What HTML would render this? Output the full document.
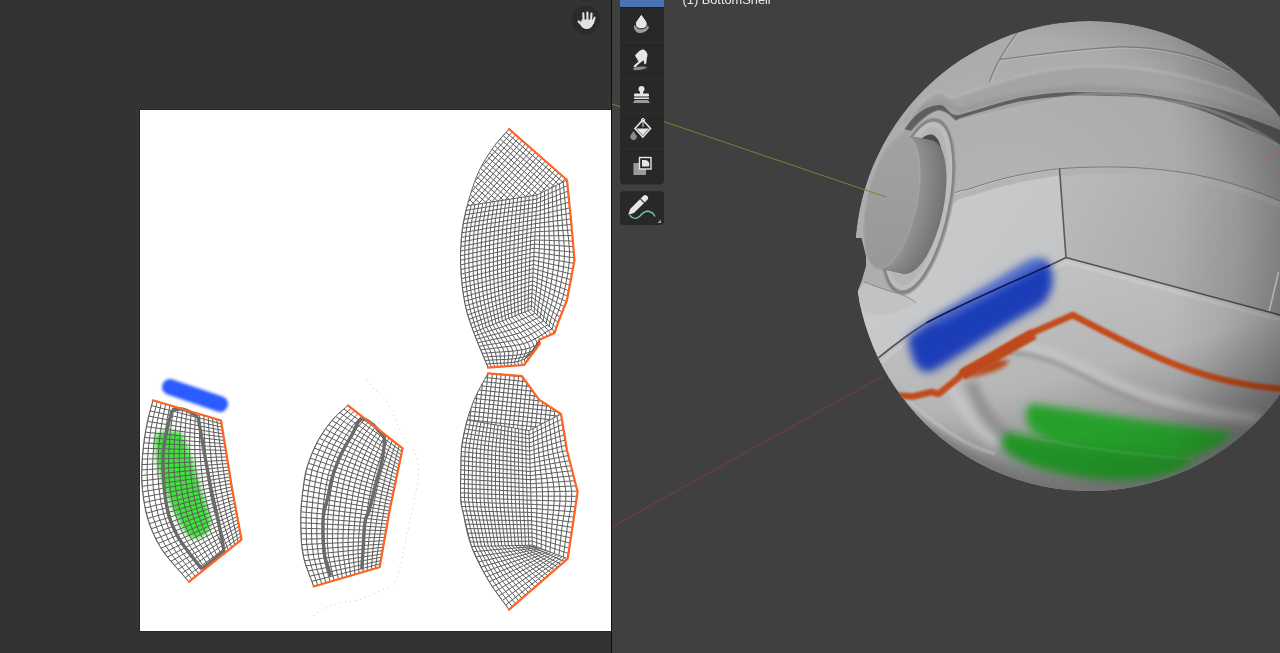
<!DOCTYPE html>
<html><head><meta charset="utf-8">
<style>
html,body{margin:0;padding:0;width:1280px;height:653px;overflow:hidden;background:#404040;font-family:"Liberation Sans",sans-serif;}
svg{display:block;position:absolute;left:0;top:0;}
.txt{position:absolute;left:682px;top:-10px;color:#e6e6e6;font-size:13px;white-space:nowrap;}
</style></head><body>
<svg width="1280" height="653" viewBox="0 0 1280 653">
<defs>
  <filter id="blur3" x="-30%" y="-30%" width="160%" height="160%"><feGaussianBlur stdDeviation="3"/></filter>
  <filter id="blur2" x="-30%" y="-30%" width="160%" height="160%"><feGaussianBlur stdDeviation="1.5"/></filter>
  <radialGradient id="sph" cx="0.35" cy="0.45" r="0.75">
    <stop offset="0" stop-color="#c4c4c4"/>
    <stop offset="0.6" stop-color="#adadad"/>
    <stop offset="1" stop-color="#8a8a8a"/>
  </radialGradient>
  <filter id="gblur" filterUnits="userSpaceOnUse" x="130" y="410" width="110" height="150"><feGaussianBlur stdDeviation="2"/></filter>
  <filter id="bblur" filterUnits="userSpaceOnUse" x="140" y="360" width="120" height="70"><feGaussianBlur stdDeviation="1.5"/></filter>
  <filter id="idf" filterUnits="userSpaceOnUse" x="670" y="-20" width="120" height="40"><feOffset dx="0" dy="0"/></filter>
</defs>
<!-- left image editor -->
<rect x="0" y="0" width="611" height="653" fill="#333333"/>
<rect x="139.5" y="109.5" width="472" height="522" fill="none" stroke="#262626" stroke-width="1"/>
<rect x="140" y="110" width="471" height="521" fill="#ffffff"/>
<clipPath id="cA"><path d="M509.0 129.0 567.0 180.0 571.0 220.0 574.5 260.0 567.0 300.0 559.0 320.0 554.6 333.0 539.0 340.0 540.0 343.0 524.0 365.0 488.0 367.6 486.5 364.0 485.0 360.4 483.5 356.7 482.0 353.1 480.4 349.4 478.9 345.8 477.5 342.3 476.1 338.8 474.8 335.4 473.6 332.2 472.5 329.1 471.4 326.3 470.5 323.5 469.5 320.9 468.7 318.3 467.9 315.7 467.1 313.1 466.4 310.3 465.7 307.4 465.0 304.3 464.4 301.0 463.8 297.5 463.2 293.9 462.7 290.3 462.2 286.5 461.8 282.7 461.5 278.9 461.1 275.2 460.9 271.5 460.7 267.9 460.6 264.4 460.5 260.8 460.5 257.3 460.5 253.7 460.6 250.2 460.8 246.8 461.0 243.3 461.2 240.0 461.5 236.8 461.8 233.6 462.1 230.6 462.5 227.7 462.9 224.9 463.4 222.2 463.9 219.6 464.5 216.9 465.1 214.3 465.7 211.5 466.4 208.7 467.2 205.8 468.0 202.7 468.9 199.5 469.9 196.3 470.9 192.9 471.9 189.6 473.1 186.2 474.2 182.9 475.4 179.7 476.6 176.6 477.9 173.6 479.2 170.7 480.6 167.9 482.0 165.2 483.5 162.5 485.1 159.9 486.6 157.4 488.2 154.9 489.8 152.5 491.3 150.2 492.9 147.9 494.6 145.5 496.4 143.2 498.2 141.1 500.0 139.0 501.8 137.0 503.6 135.0 505.4 133.1 507.2 131.1 509.0 129.0Z"/></clipPath>
<g clip-path="url(#cA)"><clipPath id="gA"><path d="M509.0 129.0 567.0 180.0 537.0 195.0 467.2 205.8 477.9 173.6 492.9 147.9Z"/></clipPath><g clip-path="url(#gA)"><path d="M496.1 -22.9L661.3 122.3M502.3 -23.3L357.1 141.9M493.2 -19.6L658.4 125.6M505.6 -20.4L360.4 144.8M490.2 -16.3L655.5 128.9M508.9 -17.5L363.7 147.8M487.3 -13.0L652.6 132.2M512.2 -14.6L367.0 150.7M484.4 -9.7L649.7 135.5M515.5 -11.7L370.3 153.6M481.5 -6.4L646.8 138.8M518.8 -8.8L373.6 156.5M478.6 -3.1L643.9 142.1M522.1 -5.9L376.9 159.4M475.7 0.2L641.0 145.4M525.4 -3.0L380.2 162.3M472.8 3.5L638.1 148.7M528.7 -0.1L383.5 165.2M469.9 6.8L635.2 152.0M532.0 2.8L386.8 168.1M467.0 10.1L632.3 155.3M535.3 5.7L390.1 171.0M464.1 13.4L629.4 158.6M538.6 8.6L393.4 173.9M461.2 16.7L626.5 161.9M541.9 11.5L396.7 176.8M458.3 20.0L623.6 165.2M545.2 14.4L400.0 179.7M455.4 23.3L620.7 168.5M548.5 17.3L403.3 182.6M452.5 26.6L617.8 171.9M551.9 20.2L406.6 185.5M449.6 30.0L614.9 175.2M555.2 23.1L410.0 188.4M446.7 33.3L612.0 178.5M558.5 26.0L413.3 191.3M443.8 36.6L609.1 181.8M561.8 28.9L416.6 194.2M440.9 39.9L606.2 185.1M565.1 31.8L419.9 197.1M438.0 43.2L603.3 188.4M568.4 34.7L423.2 200.0M435.1 46.5L600.4 191.7M571.7 37.6L426.5 202.9M432.2 49.8L597.4 195.0M575.0 40.6L429.8 205.8M429.3 53.1L594.5 198.3M578.3 43.5L433.1 208.7M426.4 56.4L591.6 201.6M581.6 46.4L436.4 211.6M423.5 59.7L588.7 204.9M584.9 49.3L439.7 214.5M420.6 63.0L585.8 208.2M588.2 52.2L443.0 217.4M417.6 66.3L582.9 211.5M591.5 55.1L446.3 220.4M414.7 69.6L580.0 214.8M594.8 58.0L449.6 223.3M411.8 72.9L577.1 218.1M598.1 60.9L452.9 226.2M408.9 76.2L574.2 221.4M601.4 63.8L456.2 229.1M406.0 79.5L571.3 224.7M604.7 66.7L459.5 232.0M403.1 82.8L568.4 228.0M608.0 69.6L462.8 234.9M400.2 86.1L565.5 231.4M611.4 72.5L466.1 237.8M397.3 89.5L562.6 234.7M614.7 75.4L469.5 240.7M394.4 92.8L559.7 238.0M618.0 78.3L472.8 243.6M391.5 96.1L556.8 241.3M621.3 81.2L476.1 246.5M388.6 99.4L553.9 244.6M624.6 84.1L479.4 249.4M385.7 102.7L551.0 247.9M627.9 87.0L482.7 252.3M382.8 106.0L548.1 251.2M631.2 89.9L486.0 255.2M379.9 109.3L545.2 254.5M634.5 92.8L489.3 258.1M377.0 112.6L542.3 257.8M637.8 95.7L492.6 261.0M374.1 115.9L539.4 261.1M641.1 98.6L495.9 263.9M371.2 119.2L536.5 264.4M644.4 101.5L499.2 266.8M368.3 122.5L533.6 267.7M647.7 104.4L502.5 269.7M365.4 125.8L530.7 271.0M651.0 107.3L505.8 272.6M362.5 129.1L527.8 274.3M654.3 110.2L509.1 275.5M359.6 132.4L524.8 277.6M657.6 113.2L512.4 278.4M356.7 135.7L521.9 280.9M660.9 116.1L515.7 281.3" fill="none" stroke="#5c5c5c" stroke-width="1"/></g><path d="M540.8 193.1 540.5 202.3 540.3 211.5 540.0 220.7 539.8 229.9 539.6 239.1 539.3 248.3 538.9 257.6 538.3 266.7 537.6 275.9 536.9 285.1 536.0 294.2 535.0 303.3 534.1 312.4M544.5 191.2 544.5 200.8 544.4 210.4 544.4 220.0 544.4 229.6 544.4 239.2 544.4 248.8 544.0 258.5 543.2 268.0 542.3 277.6 541.2 287.1 539.9 296.6 538.3 305.9 537.0 315.4M548.2 189.4 548.4 199.4 548.6 209.4 548.8 219.4 549.0 229.4 549.3 239.3 549.4 249.3 549.0 259.3 548.1 269.3 546.9 279.2 545.5 289.1 543.8 298.9 541.7 308.5 540.0 318.3M552.0 187.5 552.4 197.9 552.8 208.3 553.1 218.7 553.6 229.1 554.1 239.4 554.4 249.8 554.0 260.2 553.0 270.6 551.5 280.9 549.9 291.1 547.7 301.2 545.0 311.1 542.9 321.2M555.8 185.6 556.3 196.4 556.9 207.2 557.5 218.0 558.1 228.8 558.9 239.5 559.4 250.3 559.1 261.1 557.9 271.9 556.2 282.6 554.2 293.2 551.6 303.6 548.4 313.7 545.8 324.2M559.5 183.8 560.3 194.9 561.1 206.1 561.9 217.3 562.7 228.5 563.8 239.6 564.5 250.8 564.1 262.0 562.8 273.2 560.8 284.2 558.5 295.2 555.5 305.9 551.7 316.4 548.8 327.1M563.2 181.9 564.3 193.5 565.3 205.0 566.2 216.6 567.3 228.2 568.6 239.7 569.5 251.3 569.2 262.9 567.6 274.5 565.4 285.9 562.9 297.2 559.4 308.3 555.1 319.0 551.7 330.1M567.0 180.0 568.2 192.0 569.4 203.9 570.6 215.9 571.9 227.9 573.4 239.8 574.5 251.8 574.2 263.8 572.5 275.8 570.1 287.5 567.2 299.2 563.3 310.6 558.4 321.6 554.6 333.0M537.0 195.0 539.3 193.8 541.6 192.7 543.9 191.5 546.2 190.4 548.5 189.2 550.8 188.1 553.2 186.9 555.5 185.8 557.8 184.6 560.1 183.5 562.4 182.3 564.7 181.2 567.0 180.0M536.8 199.1 539.2 198.0 541.5 197.0 543.9 196.0 546.3 194.9 548.6 193.9 551.0 192.8 553.4 191.8 555.7 190.8 558.1 189.7 560.5 188.7 562.8 187.6 565.2 186.6 567.6 185.6M536.6 203.2 539.0 202.3 541.4 201.3 543.9 200.4 546.3 199.5 548.7 198.5 551.1 197.6 553.6 196.7 556.0 195.8 558.4 194.8 560.8 193.9 563.3 193.0 565.7 192.0 568.1 191.1M536.4 207.3 538.9 206.5 541.4 205.6 543.8 204.8 546.3 204.0 548.8 203.2 551.3 202.4 553.8 201.6 556.3 200.8 558.8 199.9 561.2 199.1 563.7 198.3 566.2 197.5 568.7 196.7M536.2 211.4 538.7 210.7 541.3 210.0 543.8 209.3 546.4 208.6 548.9 207.9 551.4 207.1 554.0 206.4 556.5 205.7 559.1 205.0 561.6 204.3 564.2 203.6 566.7 202.9 569.3 202.2M536.0 215.4 538.6 214.9 541.2 214.3 543.8 213.7 546.4 213.1 549.0 212.5 551.6 211.9 554.2 211.3 556.8 210.7 559.4 210.2 562.0 209.6 564.6 209.0 567.2 208.4 569.8 207.8M535.8 219.5 538.4 219.1 541.1 218.6 543.7 218.1 546.4 217.6 549.1 217.2 551.7 216.7 554.4 216.2 557.1 215.7 559.7 215.3 562.4 214.8 565.0 214.3 567.7 213.8 570.4 213.4M535.5 223.6 538.3 223.3 541.0 222.9 543.7 222.5 546.4 222.2 549.1 221.8 551.9 221.5 554.6 221.1 557.3 220.7 560.0 220.4 562.7 220.0 565.5 219.6 568.2 219.3 570.9 218.9M535.3 227.7 538.1 227.5 540.9 227.2 543.7 227.0 546.5 226.7 549.2 226.5 552.0 226.2 554.8 226.0 557.6 225.7 560.4 225.5 563.1 225.2 565.9 225.0 568.7 224.7 571.5 224.5M535.1 231.8 538.0 231.7 540.8 231.5 543.7 231.4 546.5 231.3 549.4 231.1 552.2 231.0 555.1 230.8 557.9 230.7 560.8 230.6 563.6 230.4 566.5 230.3 569.3 230.2 572.2 230.0M534.9 235.9 537.8 235.9 540.8 235.8 543.7 235.8 546.6 235.8 549.5 235.8 552.5 235.7 555.4 235.7 558.3 235.7 561.2 235.7 564.1 235.6 567.1 235.6 570.0 235.6 572.9 235.6M534.7 240.0 537.7 240.1 540.7 240.2 543.7 240.2 546.7 240.3 549.7 240.4 552.7 240.5 555.7 240.6 558.6 240.7 561.6 240.8 564.6 240.9 567.6 240.9 570.6 241.0 573.6 241.1M534.5 244.1 537.6 244.3 540.6 244.5 543.7 244.7 546.7 244.9 549.8 245.1 552.8 245.3 555.9 245.5 558.9 245.7 562.0 245.9 565.0 246.1 568.1 246.3 571.1 246.5 574.2 246.7M534.3 248.2 537.4 248.5 540.5 248.8 543.6 249.1 546.7 249.4 549.8 249.7 552.9 250.0 556.0 250.4 559.1 250.7 562.1 251.0 565.2 251.3 568.3 251.6 571.4 251.9 574.5 252.2M534.1 252.2 537.2 252.7 540.3 253.1 543.4 253.5 546.6 254.0 549.7 254.4 552.8 254.8 555.9 255.3 559.0 255.7 562.1 256.1 565.2 256.5 568.3 257.0 571.5 257.4 574.6 257.8M533.9 256.3 537.0 256.9 540.1 257.4 543.2 258.0 546.3 258.5 549.4 259.1 552.5 259.6 555.6 260.1 558.7 260.7 561.8 261.2 564.9 261.8 568.0 262.3 571.2 262.9 574.3 263.4M533.7 260.4 536.8 261.1 539.8 261.7 542.9 262.4 546.0 263.1 549.0 263.7 552.1 264.4 555.2 265.0 558.3 265.7 561.3 266.3 564.4 267.0 567.5 267.7 570.6 268.3 573.6 269.0M533.5 264.5 536.5 265.3 539.5 266.1 542.5 266.8 545.6 267.6 548.6 268.4 551.6 269.1 554.6 269.9 557.7 270.7 560.7 271.4 563.7 272.2 566.7 273.0 569.7 273.7 572.8 274.5M533.3 268.6 536.2 269.5 539.2 270.4 542.1 271.2 545.1 272.1 548.1 273.0 551.0 273.9 554.0 274.7 556.9 275.6 559.9 276.5 562.9 277.4 565.8 278.2 568.8 279.1 571.7 280.0M533.1 272.7 535.9 273.7 538.8 274.7 541.7 275.6 544.6 276.6 547.5 277.6 550.4 278.6 553.3 279.6 556.1 280.5 559.0 281.5 561.9 282.5 564.8 283.5 567.7 284.5 570.6 285.4M532.9 276.8 535.7 277.9 538.5 279.0 541.3 280.0 544.1 281.1 546.9 282.2 549.7 283.3 552.5 284.4 555.3 285.5 558.1 286.5 560.9 287.6 563.7 288.7 566.5 289.8 569.3 290.9M532.7 280.9 535.4 282.1 538.1 283.2 540.8 284.4 543.5 285.6 546.2 286.8 548.9 288.0 551.7 289.2 554.4 290.4 557.1 291.6 559.8 292.7 562.5 293.9 565.2 295.1 567.9 296.3M532.4 285.0 535.1 286.3 537.7 287.5 540.3 288.8 542.9 290.1 545.6 291.4 548.2 292.7 550.8 294.0 553.4 295.3 556.0 296.6 558.7 297.8 561.3 299.1 563.9 300.4 566.5 301.7M532.2 289.1 534.7 290.4 537.2 291.8 539.7 293.2 542.2 294.6 544.8 296.0 547.3 297.3 549.8 298.7 552.3 300.1 554.8 301.5 557.3 302.9 559.8 304.3 562.3 305.6 564.8 307.0M532.0 293.1 534.4 294.6 536.7 296.1 539.1 297.5 541.4 299.0 543.8 300.5 546.1 301.9 548.5 303.4 550.8 304.8 553.2 306.3 555.5 307.8 557.9 309.2 560.2 310.7 562.6 312.2M531.8 297.2 534.0 298.8 536.2 300.3 538.4 301.8 540.5 303.4 542.7 304.9 544.9 306.4 547.1 308.0 549.3 309.5 551.5 311.1 553.6 312.6 555.8 314.1 558.0 315.7 560.2 317.2M531.6 301.3 533.7 302.9 535.7 304.6 537.7 306.2 539.8 307.8 541.8 309.4 543.8 311.0 545.9 312.7 547.9 314.3 550.0 315.9 552.0 317.5 554.0 319.2 556.1 320.8 558.1 322.4M531.4 305.4 533.3 307.1 535.2 308.8 537.2 310.6 539.1 312.3 541.0 314.0 542.9 315.7 544.8 317.4 546.7 319.1 548.7 320.8 550.6 322.5 552.5 324.3 554.4 326.0 556.3 327.7M467.2 205.8 465.1 215.5 463.0 225.1 461.7 234.9 460.9 244.8 460.5 254.7 460.6 264.6 461.1 274.4 462.0 284.3 463.2 294.1 464.9 303.9 467.3 313.4 470.4 322.8 473.6 332.2M471.1 205.2 469.1 214.8 467.1 224.4 465.8 234.2 465.0 244.0 464.7 253.8 464.7 263.6 465.1 273.5 466.0 283.2 467.1 293.0 468.7 302.7 470.9 312.2 473.8 321.6 476.8 330.9M475.0 204.6 473.0 214.2 471.2 223.7 469.9 233.4 469.2 243.2 468.8 252.9 468.8 262.7 469.2 272.5 469.9 282.2 471.0 291.9 472.4 301.5 474.5 311.1 477.2 320.4 480.0 329.7M478.8 204.0 477.0 213.5 475.2 223.1 474.0 232.7 473.3 242.4 472.9 252.1 472.9 261.8 473.2 271.5 473.9 281.2 474.9 290.8 476.2 300.4 478.1 309.9 480.6 319.1 483.2 328.4M482.7 203.4 481.0 212.9 479.3 222.4 478.1 231.9 477.4 241.6 477.0 251.2 477.0 260.9 477.3 270.5 477.9 280.1 478.7 289.7 479.9 299.2 481.7 308.7 484.0 317.9 486.4 327.2M486.6 202.8 484.9 212.2 483.3 221.7 482.2 231.2 481.5 240.7 481.1 250.3 481.1 259.9 481.3 269.5 481.8 279.1 482.6 288.6 483.7 298.1 485.3 307.5 487.4 316.7 489.6 325.9M490.5 202.2 488.9 211.6 487.4 221.0 486.3 230.4 485.7 239.9 485.3 249.5 485.2 259.0 485.4 268.5 485.8 278.0 486.5 287.5 487.5 296.9 488.9 306.3 490.8 315.4 492.8 324.6M494.3 201.6 492.9 210.9 491.5 220.3 490.4 229.7 489.8 239.1 489.4 248.6 489.3 258.1 489.4 267.5 489.8 277.0 490.4 286.4 491.2 295.8 492.5 305.1 494.2 314.2 496.0 323.4M498.2 201.0 496.9 210.3 495.5 219.6 494.6 228.9 493.9 238.3 493.5 247.7 493.4 257.1 493.4 266.5 493.7 275.9 494.2 285.3 495.0 294.6 496.1 303.9 497.6 313.0 499.2 322.1M502.1 200.4 500.8 209.6 499.6 218.9 498.7 228.2 498.1 237.5 497.6 246.9 497.5 256.2 497.5 265.5 497.7 274.9 498.1 284.2 498.7 293.5 499.7 302.7 501.0 311.8 502.4 320.9M506.0 199.8 504.8 209.0 503.6 218.2 502.8 227.4 502.2 236.7 501.8 246.0 501.5 255.3 501.5 264.6 501.7 273.8 502.0 283.1 502.5 292.3 503.3 301.5 504.4 310.5 505.6 319.6M509.9 199.2 508.8 208.3 507.7 217.5 506.9 226.7 506.3 235.9 505.9 245.1 505.6 254.3 505.6 263.6 505.6 272.8 505.9 282.0 506.2 291.2 506.9 300.3 507.8 309.3 508.8 318.3M513.7 198.6 512.7 207.7 511.8 216.8 511.0 225.9 510.4 235.1 510.0 244.3 509.7 253.4 509.6 262.6 509.6 271.7 509.7 280.9 510.0 290.0 510.5 299.1 511.2 308.1 512.0 317.1M517.6 198.0 516.7 207.0 515.8 216.1 515.1 225.2 514.6 234.3 514.1 243.4 513.8 252.5 513.7 261.6 513.6 270.7 513.6 279.8 513.8 288.8 514.1 297.9 514.6 306.8 515.2 315.8M521.5 197.4 520.7 206.4 519.9 215.4 519.2 224.4 518.7 233.5 518.3 242.5 517.9 251.6 517.7 260.6 517.6 269.6 517.5 278.7 517.5 287.7 517.7 296.7 518.0 305.6 518.4 314.5M525.4 196.8 524.6 205.8 523.9 214.7 523.3 223.7 522.8 232.7 522.4 241.6 522.0 250.6 521.7 259.6 521.5 268.6 521.4 277.6 521.3 286.5 521.3 295.5 521.4 304.4 521.6 313.3M529.2 196.2 528.6 205.1 528.0 214.0 527.4 222.9 527.0 231.8 526.5 240.8 526.1 249.7 525.8 258.6 525.5 267.6 525.2 276.5 525.0 285.4 524.9 294.3 524.8 303.2 524.8 312.0M533.1 195.6 532.6 204.5 532.0 213.3 531.6 222.2 531.1 231.0 530.6 239.9 530.2 248.8 529.8 257.6 529.5 266.5 529.1 275.4 528.8 284.2 528.5 293.1 528.2 301.9 528.0 310.8M537.0 195.0 536.6 203.8 536.1 212.6 535.7 221.4 535.2 230.2 534.8 239.0 534.3 247.8 533.9 256.7 533.4 265.5 533.0 274.3 532.5 283.1 532.1 291.9 531.6 300.7 531.2 309.5M467.2 205.8 472.6 205.0 477.9 204.1 483.3 203.3 488.7 202.5 494.0 201.6 499.4 200.8 504.8 200.0 510.2 199.2 515.5 198.3 520.9 197.5 526.3 196.7 531.6 195.8 537.0 195.0M466.3 210.3 471.7 209.4 477.1 208.6 482.5 207.7 488.0 206.8 493.4 206.0 498.8 205.1 504.2 204.3 509.7 203.4 515.1 202.5 520.5 201.7 525.9 200.8 531.4 200.0 536.8 199.1M465.3 214.8 470.7 213.9 476.2 213.0 481.7 212.1 487.2 211.2 492.7 210.3 498.2 209.4 503.7 208.5 509.1 207.6 514.6 206.7 520.1 205.9 525.6 205.0 531.1 204.1 536.6 203.2M464.2 219.3 469.8 218.3 475.3 217.4 480.9 216.5 486.4 215.6 492.0 214.6 497.5 213.7 503.1 212.8 508.6 211.9 514.2 211.0 519.7 210.0 525.3 209.1 530.8 208.2 536.4 207.3M463.3 223.8 468.9 222.8 474.5 221.8 480.1 220.9 485.7 219.9 491.3 219.0 496.9 218.0 502.5 217.1 508.1 216.1 513.7 215.2 519.4 214.2 525.0 213.3 530.6 212.3 536.2 211.4M462.5 228.3 468.2 227.3 473.8 226.3 479.5 225.3 485.1 224.3 490.8 223.3 496.4 222.4 502.1 221.4 507.7 220.4 513.4 219.4 519.0 218.4 524.7 217.4 530.3 216.4 536.0 215.4M461.9 232.8 467.6 231.8 473.2 230.8 478.9 229.8 484.6 228.7 490.3 227.7 496.0 226.7 501.7 225.7 507.3 224.6 513.0 223.6 518.7 222.6 524.4 221.6 530.1 220.6 535.8 219.5M461.4 237.4 467.1 236.3 472.8 235.3 478.5 234.2 484.2 233.2 489.9 232.1 495.6 231.0 501.3 230.0 507.0 228.9 512.7 227.9 518.4 226.8 524.1 225.7 529.8 224.7 535.5 223.6M461.1 242.0 466.8 240.9 472.5 239.8 478.2 238.7 483.9 237.6 489.6 236.5 495.4 235.4 501.1 234.3 506.8 233.2 512.5 232.1 518.2 231.0 523.9 229.9 529.6 228.8 535.3 227.7M460.8 246.6 466.5 245.4 472.2 244.3 478.0 243.2 483.7 242.0 489.4 240.9 495.1 239.7 500.8 238.6 506.5 237.5 512.3 236.3 518.0 235.2 523.7 234.1 529.4 232.9 535.1 231.8M460.6 251.1 466.3 250.0 472.0 248.8 477.8 247.6 483.5 246.5 489.2 245.3 494.9 244.1 500.6 242.9 506.3 241.8 512.1 240.6 517.8 239.4 523.5 238.2 529.2 237.1 534.9 235.9M460.5 255.7 466.2 254.5 471.9 253.3 477.6 252.1 483.3 250.9 489.1 249.7 494.8 248.5 500.5 247.3 506.2 246.0 511.9 244.8 517.6 243.6 523.3 242.4 529.0 241.2 534.7 240.0M460.5 260.3 466.2 259.1 471.9 257.8 477.6 256.6 483.3 255.3 489.0 254.1 494.7 252.8 500.4 251.6 506.0 250.3 511.7 249.1 517.4 247.8 523.1 246.6 528.8 245.3 534.5 244.1M460.6 264.9 466.3 263.6 471.9 262.3 477.6 261.1 483.3 259.8 488.9 258.5 494.6 257.2 500.3 255.9 506.0 254.6 511.6 253.3 517.3 252.0 523.0 250.7 528.6 249.4 534.3 248.2M460.8 269.5 466.4 268.2 472.1 266.9 477.7 265.5 483.3 264.2 489.0 262.9 494.6 261.5 500.3 260.2 505.9 258.9 511.5 257.6 517.2 256.2 522.8 254.9 528.5 253.6 534.1 252.2M461.1 274.1 466.7 272.7 472.3 271.4 477.9 270.0 483.5 268.6 489.1 267.3 494.7 265.9 500.3 264.5 505.9 263.2 511.5 261.8 517.1 260.4 522.7 259.1 528.3 257.7 533.9 256.3M461.4 278.7 467.0 277.3 472.5 275.9 478.1 274.5 483.7 273.1 489.2 271.7 494.8 270.3 500.3 268.8 505.9 267.4 511.5 266.0 517.0 264.6 522.6 263.2 528.1 261.8 533.7 260.4M461.9 283.2 467.4 281.8 472.9 280.4 478.4 278.9 483.9 277.5 489.4 276.0 494.9 274.6 500.4 273.2 505.9 271.7 511.4 270.3 517.0 268.8 522.5 267.4 528.0 266.0 533.5 264.5M462.4 287.8 467.9 286.3 473.3 284.8 478.8 283.4 484.2 281.9 489.7 280.4 495.1 278.9 500.6 277.5 506.0 276.0 511.5 274.5 516.9 273.0 522.4 271.6 527.8 270.1 533.3 268.6M463.0 292.4 468.4 290.8 473.8 289.3 479.2 287.8 484.6 286.3 489.9 284.8 495.3 283.3 500.7 281.8 506.1 280.3 511.5 278.7 516.9 277.2 522.3 275.7 527.7 274.2 533.1 272.7M463.7 296.9 469.0 295.4 474.3 293.8 479.6 292.3 485.0 290.7 490.3 289.2 495.6 287.6 500.9 286.1 506.2 284.5 511.6 283.0 516.9 281.4 522.2 279.9 527.5 278.3 532.9 276.8M464.4 301.4 469.7 299.8 474.9 298.3 480.2 296.7 485.4 295.1 490.7 293.5 495.9 291.9 501.2 290.4 506.4 288.8 511.7 287.2 516.9 285.6 522.2 284.0 527.4 282.5 532.7 280.9M465.3 305.9 470.5 304.3 475.7 302.7 480.8 301.1 486.0 299.5 491.2 297.9 496.3 296.3 501.5 294.6 506.6 293.0 511.8 291.4 517.0 289.8 522.1 288.2 527.3 286.6 532.4 285.0M466.4 310.4 471.5 308.7 476.6 307.1 481.6 305.5 486.7 303.8 491.7 302.2 496.8 300.5 501.9 298.9 506.9 297.3 512.0 295.6 517.1 294.0 522.1 292.3 527.2 290.7 532.2 289.1M467.7 314.8 472.7 313.1 477.6 311.5 482.6 309.8 487.5 308.1 492.5 306.5 497.4 304.8 502.3 303.1 507.3 301.5 512.2 299.8 517.2 298.1 522.1 296.5 527.1 294.8 532.0 293.1M469.2 319.2 474.0 317.5 478.8 315.8 483.6 314.1 488.4 312.4 493.3 310.7 498.1 309.0 502.9 307.4 507.7 305.7 512.5 304.0 517.4 302.3 522.2 300.6 527.0 298.9 531.8 297.2M470.7 323.5 475.4 321.8 480.0 320.1 484.7 318.4 489.4 316.7 494.1 315.0 498.8 313.3 503.5 311.6 508.2 309.8 512.9 308.1 517.6 306.4 522.2 304.7 526.9 303.0 531.6 301.3M472.2 327.8 476.7 326.1 481.3 324.4 485.8 322.7 490.4 320.9 495.0 319.2 499.5 317.5 504.1 315.8 508.6 314.0 513.2 312.3 517.7 310.6 522.3 308.9 526.9 307.1 531.4 305.4M473.6 332.2 474.7 334.9 475.8 337.6 476.9 340.4 478.0 343.1 479.1 345.8 480.2 348.5 481.4 351.3 482.5 354.0 483.6 356.7 484.7 359.4 485.8 362.2 486.9 364.9 488.0 367.6M476.8 330.9 478.1 333.8 479.3 336.6 480.6 339.4 481.9 342.2 483.2 345.0 484.4 347.9 485.7 350.7 486.8 353.6 487.7 356.4 488.6 359.1 489.5 361.8 490.3 364.6 491.5 367.4M480.0 329.7 481.4 332.6 482.9 335.5 484.3 338.5 485.8 341.4 487.2 344.3 488.6 347.3 490.0 350.2 491.2 353.3 491.9 356.2 492.5 358.9 493.2 361.6 493.8 364.4 495.0 367.4M483.2 328.4 484.8 331.5 486.4 334.5 488.0 337.6 489.6 340.6 491.2 343.6 492.8 346.7 494.4 349.8 495.6 353.0 496.1 356.0 496.5 358.7 496.8 361.4 497.2 364.2 498.5 367.4M486.4 327.2 488.2 330.3 489.9 333.5 491.7 336.6 493.5 339.8 495.3 342.9 497.0 346.1 498.7 349.4 500.0 352.8 500.3 355.8 500.4 358.6 500.5 361.3 500.7 364.1 502.0 367.4M489.6 325.9 491.5 329.2 493.5 332.5 495.4 335.7 497.4 339.0 499.3 342.3 501.2 345.6 503.0 348.9 504.4 352.5 504.5 355.6 504.4 358.4 504.2 361.1 504.1 364.0 505.5 367.5M492.8 324.6 494.9 328.0 497.0 331.4 499.1 334.8 501.2 338.2 503.3 341.5 505.4 345.0 507.4 348.5 508.8 352.2 508.7 355.4 508.3 358.2 507.9 360.9 507.6 363.8 509.0 367.4M496.0 323.4 498.2 326.9 500.5 330.4 502.8 333.8 505.1 337.3 507.3 340.8 509.6 344.3 511.7 348.0 513.2 351.9 512.8 355.2 512.2 357.9 511.6 360.6 511.0 363.5 512.5 367.3M499.2 322.1 501.6 325.7 504.0 329.3 506.5 332.8 508.9 336.4 511.4 340.0 513.8 343.6 516.0 347.3 517.6 351.4 517.0 354.8 516.2 357.5 515.3 360.2 514.5 363.1 516.0 367.0M502.4 320.8 505.0 324.5 507.6 328.2 510.2 331.8 512.8 335.4 515.4 339.1 517.9 342.8 520.3 346.6 521.9 350.8 521.2 354.2 520.1 356.9 518.9 359.5 517.9 362.5 519.4 366.4M505.6 319.6 508.3 323.3 511.1 327.0 513.8 330.6 516.6 334.3 519.4 338.0 522.0 341.7 524.6 345.6 526.2 349.9 525.3 353.3 523.9 356.0 522.5 358.5 521.2 361.4 522.8 365.5M508.8 318.3 511.6 322.1 514.5 325.7 517.5 329.4 520.4 333.0 523.3 336.7 526.1 340.4 528.7 344.4 530.4 348.7 529.2 352.1 527.5 354.6 525.8 357.0 524.3 359.9 525.9 364.0M512.0 317.1 514.9 320.7 517.9 324.4 521.0 327.9 524.0 331.5 527.0 335.2 529.9 338.9 532.6 342.7 534.3 347.1 532.8 350.4 530.9 352.8 528.9 355.0 527.0 357.7 528.7 361.8M515.2 315.8 518.2 319.4 521.3 322.9 524.4 326.4 527.5 329.9 530.5 333.4 533.5 337.1 536.3 340.9 537.9 345.1 536.2 348.3 533.9 350.6 531.5 352.6 529.4 355.1 530.9 359.1M518.4 314.5 521.4 318.0 524.6 321.4 527.7 324.8 530.8 328.2 534.0 331.6 537.0 335.1 539.8 338.8 541.3 343.1 539.2 346.1 536.6 348.1 533.9 349.9 531.3 352.2 532.8 356.2M521.6 313.3 524.7 316.6 527.8 319.9 531.0 323.2 534.2 326.4 537.3 329.7 540.3 333.1 543.1 336.7 544.6 340.9 542.2 343.8 539.1 345.6 536.0 347.1 533.1 349.2 534.5 353.1M524.8 312.0 527.9 315.3 531.0 318.4 534.2 321.5 537.4 324.7 540.6 327.8 543.6 331.1 546.4 334.6 547.8 338.7 545.0 341.4 541.6 343.0 538.1 344.3 534.8 346.2 536.1 350.0M528.0 310.8 531.1 313.9 534.3 316.9 537.5 319.9 540.7 322.9 543.9 325.9 547.0 329.1 549.8 332.5 551.1 336.5 548.0 339.1 544.1 340.5 540.2 341.5 536.6 343.2 537.8 346.9M531.2 309.5 534.3 312.5 537.6 315.4 540.9 318.3 544.1 321.2 547.3 324.1 550.4 327.2 553.3 330.5 554.5 334.5 551.1 336.9 546.8 338.0 542.6 338.9 538.6 340.4 539.7 344.0M473.6 332.2 478.0 330.5 482.5 328.7 486.9 327.0 491.3 325.2 495.8 323.5 500.2 321.7 504.6 320.0 509.0 318.2 513.5 316.5 517.9 314.7 522.3 313.0 526.8 311.2 531.2 309.5M475.0 335.7 479.8 334.2 484.5 332.6 489.2 331.1 493.9 329.6 498.7 328.0 503.4 326.4 508.1 324.8 512.8 323.1 517.4 321.2 521.9 319.3 526.4 317.3 530.8 315.3 535.3 313.4M476.5 339.3 481.5 337.9 486.5 336.6 491.6 335.2 496.6 333.9 501.6 332.5 506.6 331.1 511.6 329.6 516.6 327.8 521.3 325.8 525.9 323.7 530.5 321.5 535.0 319.3 539.5 317.2M477.9 342.8 483.2 341.6 488.6 340.5 493.9 339.3 499.2 338.2 504.6 337.0 509.9 335.7 515.2 334.3 520.4 332.5 525.3 330.4 530.0 328.1 534.6 325.7 539.1 323.3 543.8 320.9M479.4 346.4 485.0 345.3 490.6 344.4 496.2 343.5 501.9 342.5 507.5 341.5 513.1 340.4 518.7 339.1 524.1 337.3 529.2 335.1 534.0 332.6 538.7 329.9 543.2 327.3 548.0 324.7M480.8 349.9 486.7 349.1 492.6 348.4 498.5 347.7 504.4 347.0 510.3 346.2 516.2 345.2 522.1 344.0 527.7 342.3 533.0 339.9 537.9 337.2 542.5 334.4 547.1 331.5 551.9 328.8M482.2 353.4 488.3 352.9 494.4 352.4 500.5 352.0 506.6 351.6 512.7 351.1 518.8 350.4 524.8 349.3 530.6 347.7 536.0 345.3 540.8 342.5 545.4 339.5 549.9 336.5 554.7 333.6M483.7 357.0 489.4 356.6 495.2 356.3 501.0 356.1 506.7 355.8 512.5 355.5 518.2 354.9 523.9 353.9 529.3 352.2 534.2 349.7 538.5 346.7 542.5 343.4 546.5 340.2 550.6 337.0M485.1 360.5 490.4 360.1 495.7 359.8 501.1 359.6 506.4 359.4 511.7 359.0 517.0 358.4 522.2 357.3 527.1 355.5 531.4 352.6 535.1 349.2 538.4 345.6 541.6 341.9 545.1 338.4M486.6 364.1 491.4 363.6 496.3 363.4 501.1 363.2 506.0 363.0 510.9 362.6 515.7 361.9 520.5 360.8 524.9 358.7 528.7 355.6 531.7 351.8 534.3 347.7 536.8 343.6 539.6 339.7M488.0 367.6 492.8 367.4 497.7 367.4 502.5 367.4 507.4 367.4 512.2 367.3 517.0 366.9 521.8 365.8 526.2 363.8 529.8 360.6 532.5 356.6 534.9 352.4 537.1 348.1 539.7 344.0" fill="none" stroke="#5c5c5c" stroke-width="1"/></g>
<path d="M509.0 129.0 567.0 180.0 571.0 220.0 574.5 260.0 567.0 300.0 559.0 320.0 554.6 333.0 539.0 340.0 540.0 343.0 524.0 365.0 488.0 367.6 486.5 364.0 485.0 360.4 483.5 356.7 482.0 353.1 480.4 349.4 478.9 345.8 477.5 342.3 476.1 338.8 474.8 335.4 473.6 332.2 472.5 329.1 471.4 326.3 470.5 323.5 469.5 320.9 468.7 318.3 467.9 315.7 467.1 313.1 466.4 310.3 465.7 307.4 465.0 304.3 464.4 301.0 463.8 297.5 463.2 293.9 462.7 290.3 462.2 286.5 461.8 282.7 461.5 278.9 461.1 275.2 460.9 271.5 460.7 267.9 460.6 264.4 460.5 260.8 460.5 257.3 460.5 253.7 460.6 250.2 460.8 246.8 461.0 243.3 461.2 240.0 461.5 236.8 461.8 233.6 462.1 230.6 462.5 227.7 462.9 224.9 463.4 222.2 463.9 219.6 464.5 216.9 465.1 214.3 465.7 211.5 466.4 208.7 467.2 205.8 468.0 202.7 468.9 199.5 469.9 196.3 470.9 192.9 471.9 189.6 473.1 186.2 474.2 182.9 475.4 179.7 476.6 176.6 477.9 173.6 479.2 170.7 480.6 167.9 482.0 165.2 483.5 162.5 485.1 159.9 486.6 157.4 488.2 154.9 489.8 152.5 491.3 150.2 492.9 147.9 494.6 145.5 496.4 143.2 498.2 141.1 500.0 139.0 501.8 137.0 503.6 135.0 505.4 133.1 507.2 131.1 509.0 129.0Z" fill="none" stroke="#5a5a5a" stroke-width="1"/>
<path d="M509.0 129.0 567.0 180.0 571.0 220.0 574.5 260.0 567.0 300.0 559.0 320.0 554.6 333.0 539.0 340.0" fill="none" stroke="#ff6424" stroke-width="2.2" stroke-linejoin="round" stroke-linecap="round"/>
<path d="M540.0 343.5 524.0 365.0 488.0 367.6" fill="none" stroke="#ff6424" stroke-width="2.2" stroke-linejoin="round" stroke-linecap="round"/>
<clipPath id="cB"><path d="M488.0 373.3 521.8 376.0 539.0 399.7 561.0 414.0 566.9 450.0 577.6 491.8 572.0 530.0 567.7 558.7 509.0 609.7 506.4 606.1 503.8 602.6 501.2 599.1 498.6 595.6 496.0 592.0 493.5 588.4 491.0 584.7 488.6 580.8 486.2 576.8 483.9 572.6 481.5 568.3 479.3 564.0 477.1 559.6 475.0 555.2 473.1 550.8 471.4 546.5 469.9 542.0 468.5 537.4 467.3 532.6 466.2 527.9 465.2 523.3 464.4 519.0 463.6 515.2 462.9 512.0 462.3 509.5 461.9 507.8 461.5 506.6 461.3 505.6 461.1 504.7 460.9 503.6 460.8 502.1 460.7 500.0 460.6 497.2 460.5 494.0 460.5 490.4 460.5 486.6 460.5 482.7 460.6 478.8 460.6 475.0 460.7 471.5 460.8 468.2 460.8 464.9 460.8 461.7 460.9 458.5 461.0 455.3 461.2 452.2 461.4 449.0 461.8 445.8 462.2 442.6 462.8 439.3 463.4 436.0 464.0 432.8 464.8 429.5 465.5 426.3 466.3 423.1 467.2 420.0 468.1 416.9 469.0 413.9 470.0 411.0 471.0 408.0 472.1 405.1 473.2 402.2 474.4 399.3 475.7 396.4 477.3 393.1 478.9 389.8 480.7 386.5 482.5 383.2 484.4 379.9 486.2 376.6 488.0 373.3Z"/></clipPath>
<g clip-path="url(#cB)"><clipPath id="gB"><path d="M488.0 373.3 521.8 376.0 539.0 399.7 561.0 414.0 529.0 430.6 467.2 420.0 475.7 396.4Z"/></clipPath><g clip-path="url(#gB)"><path d="M389.6 256.8L608.4 279.8M394.5 252.9L371.5 471.7M389.2 261.2L608.0 284.2M398.9 253.3L375.9 472.1M388.7 265.5L607.5 288.5M403.2 253.8L380.2 472.6M388.3 269.9L607.1 292.9M407.6 254.2L384.6 473.0M387.8 274.3L606.6 297.3M412.0 254.7L389.0 473.5M387.3 278.7L606.1 301.7M416.4 255.2L393.4 474.0M386.9 283.0L605.7 306.0M420.7 255.6L397.7 474.4M386.4 287.4L605.2 310.4M425.1 256.1L402.1 474.9M386.0 291.8L604.8 314.8M429.5 256.5L406.5 475.3M385.5 296.2L604.3 319.2M433.9 257.0L410.9 475.8M385.0 300.5L603.8 323.5M438.2 257.5L415.2 476.3M384.6 304.9L603.4 327.9M442.6 257.9L419.6 476.7M384.1 309.3L602.9 332.3M447.0 258.4L424.0 477.2M383.7 313.7L602.5 336.7M451.4 258.8L428.4 477.6M383.2 318.0L602.0 341.0M455.7 259.3L432.7 478.1M382.7 322.4L601.5 345.4M460.1 259.8L437.1 478.6M382.3 326.8L601.1 349.8M464.5 260.2L441.5 479.0M381.8 331.2L600.6 354.2M468.9 260.7L445.9 479.5M381.4 335.5L600.2 358.5M473.2 261.1L450.2 479.9M380.9 339.9L599.7 362.9M477.6 261.6L454.6 480.4M380.4 344.3L599.2 367.3M482.0 262.1L459.0 480.9M380.0 348.7L598.8 371.7M486.4 262.5L463.4 481.3M379.5 353.1L598.3 376.0M490.7 263.0L467.8 481.8M379.1 357.4L597.9 380.4M495.1 263.4L472.1 482.2M378.6 361.8L597.4 384.8M499.5 263.9L476.5 482.7M378.1 366.2L596.9 389.2M503.9 264.4L480.9 483.2M377.7 370.6L596.5 393.5M508.2 264.8L485.3 483.6M377.2 374.9L596.0 397.9M512.6 265.3L489.6 484.1M376.8 379.3L595.6 402.3M517.0 265.7L494.0 484.5M376.3 383.7L595.1 406.7M521.4 266.2L498.4 485.0M375.8 388.1L594.6 411.1M525.8 266.7L502.8 485.5M375.4 392.4L594.2 415.4M530.1 267.1L507.1 485.9M374.9 396.8L593.7 419.8M534.5 267.6L511.5 486.4M374.5 401.2L593.3 424.2M538.9 268.0L515.9 486.8M374.0 405.6L592.8 428.6M543.3 268.5L520.3 487.3M373.5 409.9L592.3 432.9M547.6 269.0L524.6 487.8M373.1 414.3L591.9 437.3M552.0 269.4L529.0 488.2M372.6 418.7L591.4 441.7M556.4 269.9L533.4 488.7M372.2 423.1L591.0 446.1M560.8 270.3L537.8 489.1M371.7 427.4L590.5 450.4M565.1 270.8L542.1 489.6M371.2 431.8L590.0 454.8M569.5 271.3L546.5 490.1M370.8 436.2L589.6 459.2M573.9 271.7L550.9 490.5M370.3 440.6L589.1 463.6M578.3 272.2L555.3 491.0M369.9 444.9L588.7 467.9M582.6 272.6L559.6 491.4M369.4 449.3L588.2 472.3M587.0 273.1L564.0 491.9M368.9 453.7L587.7 476.7M591.4 273.6L568.4 492.4M368.5 458.1L587.3 481.1M595.8 274.0L572.8 492.8M368.0 462.4L586.8 485.4M600.1 274.5L577.1 493.3M367.6 466.8L586.4 489.8M604.5 274.9L581.5 493.7" fill="none" stroke="#5c5c5c" stroke-width="1"/></g><path d="M533.0 428.5 533.4 437.6 533.9 446.8 534.3 455.9 534.9 465.0 535.6 474.0 536.2 483.1 536.6 492.2 536.8 501.3 536.8 510.4 536.7 519.5 536.7 528.7 536.7 537.8 536.7 546.9M537.0 426.5 537.6 435.9 538.2 445.3 538.9 454.7 539.8 464.0 540.8 473.4 541.8 482.7 542.5 492.1 542.6 501.5 542.3 510.9 541.9 520.3 541.6 529.7 541.4 539.2 541.1 548.6M541.0 424.4 541.8 434.1 542.6 443.8 543.5 453.5 544.7 463.1 546.1 472.7 547.5 482.3 548.3 492.0 548.3 501.8 547.8 511.5 547.0 521.1 546.5 530.8 546.0 540.5 545.6 550.3M545.0 422.3 546.0 432.3 547.0 442.3 548.1 452.3 549.6 462.2 551.4 472.0 553.1 481.9 554.2 491.9 554.1 502.0 553.3 512.0 552.2 521.9 551.4 531.9 550.7 541.9 550.0 552.0M549.0 420.2 550.2 430.5 551.3 440.9 552.7 451.1 554.5 461.3 556.7 471.4 558.7 481.5 560.0 491.8 559.9 502.2 558.8 512.5 557.4 522.7 556.3 533.0 555.4 543.3 554.4 553.6M553.0 418.2 554.3 428.8 555.7 439.4 557.2 450.0 559.4 460.4 562.0 470.7 564.4 481.1 565.9 491.7 565.7 502.4 564.3 513.0 562.5 523.5 561.2 534.1 560.1 544.7 558.9 555.3M557.0 416.1 558.5 427.0 560.0 437.9 561.8 448.8 564.3 459.5 567.3 470.1 570.0 480.7 571.7 491.6 571.4 502.6 569.8 513.5 567.7 524.3 566.2 535.2 564.7 546.1 563.3 557.0M561.0 414.0 562.7 425.2 564.4 436.4 566.4 447.6 569.2 458.6 572.5 469.4 575.7 480.3 577.6 491.5 577.2 502.8 575.3 514.0 572.9 525.1 571.1 536.3 569.4 547.5 567.7 558.7M529.0 430.6 531.5 429.3 533.9 428.0 536.4 426.8 538.8 425.5 541.3 424.2 543.8 422.9 546.2 421.7 548.7 420.4 551.2 419.1 553.6 417.8 556.1 416.6 558.5 415.3 561.0 414.0M529.1 434.7 531.6 433.5 534.1 432.3 536.7 431.1 539.2 429.9 541.7 428.7 544.2 427.5 546.7 426.4 549.2 425.2 551.8 424.0 554.3 422.8 556.8 421.6 559.3 420.4 561.8 419.2M529.2 438.8 531.8 437.7 534.4 436.6 536.9 435.5 539.5 434.4 542.1 433.3 544.6 432.2 547.2 431.0 549.8 429.9 552.3 428.8 554.9 427.7 557.5 426.6 560.0 425.5 562.6 424.4M529.4 442.9 532.0 441.9 534.6 440.8 537.2 439.8 539.8 438.8 542.4 437.8 545.0 436.8 547.7 435.7 550.3 434.7 552.9 433.7 555.5 432.7 558.1 431.7 560.7 430.6 563.4 429.6M529.5 447.0 532.1 446.0 534.8 445.1 537.5 444.2 540.1 443.2 542.8 442.3 545.5 441.4 548.1 440.4 550.8 439.5 553.5 438.6 556.1 437.6 558.8 436.7 561.5 435.8 564.1 434.8M529.6 451.1 532.3 450.2 535.0 449.4 537.8 448.5 540.5 447.7 543.2 446.8 545.9 446.0 548.7 445.1 551.4 444.3 554.1 443.4 556.8 442.6 559.5 441.7 562.3 440.9 565.0 440.0M529.7 455.2 532.5 454.4 535.3 453.6 538.1 452.9 540.9 452.1 543.6 451.3 546.4 450.6 549.2 449.8 552.0 449.0 554.8 448.3 557.6 447.5 560.4 446.7 563.1 446.0 565.9 445.2M529.8 459.2 532.7 458.6 535.5 457.9 538.4 457.2 541.3 456.5 544.1 455.8 547.0 455.2 549.8 454.5 552.7 453.8 555.5 453.1 558.4 452.4 561.3 451.7 564.1 451.1 567.0 450.4M529.9 463.3 532.9 462.7 535.8 462.1 538.8 461.5 541.7 460.9 544.7 460.3 547.6 459.7 550.6 459.1 553.5 458.5 556.5 457.9 559.4 457.3 562.4 456.7 565.3 456.1 568.3 455.5M530.1 467.4 533.1 466.9 536.2 466.4 539.2 465.8 542.3 465.3 545.3 464.8 548.4 464.2 551.4 463.7 554.5 463.2 557.5 462.7 560.6 462.1 563.6 461.6 566.7 461.1 569.7 460.5M530.2 471.5 533.3 471.1 536.5 470.6 539.7 470.2 542.8 469.7 546.0 469.2 549.2 468.8 552.3 468.3 555.5 467.9 558.7 467.4 561.8 466.9 565.0 466.5 568.2 466.0 571.3 465.6M530.3 475.6 533.6 475.2 536.9 474.8 540.1 474.5 543.4 474.1 546.7 473.7 550.0 473.3 553.2 472.9 556.5 472.5 559.8 472.1 563.1 471.7 566.4 471.4 569.6 471.0 572.9 470.6M530.4 479.7 533.8 479.4 537.2 479.1 540.6 478.8 544.0 478.5 547.3 478.1 550.7 477.8 554.1 477.5 557.5 477.2 560.9 476.9 564.3 476.6 567.7 476.3 571.0 475.9 574.4 475.6M530.5 483.8 534.0 483.6 537.5 483.3 541.0 483.1 544.5 482.9 547.9 482.6 551.4 482.4 554.9 482.1 558.4 481.9 561.9 481.7 565.3 481.4 568.8 481.2 572.3 480.9 575.8 480.7M530.6 487.9 534.2 487.7 537.8 487.6 541.3 487.4 544.9 487.3 548.4 487.1 552.0 487.0 555.5 486.8 559.1 486.6 562.6 486.5 566.2 486.3 569.8 486.2 573.3 486.0 576.9 485.9M530.8 492.0 534.4 491.9 538.0 491.9 541.6 491.8 545.2 491.7 548.8 491.6 552.4 491.6 556.0 491.5 559.6 491.4 563.2 491.4 566.8 491.3 570.4 491.2 573.9 491.2 577.5 491.1M530.9 496.1 534.5 496.1 538.1 496.1 541.7 496.1 545.3 496.2 548.9 496.2 552.5 496.2 556.1 496.2 559.7 496.2 563.3 496.3 566.9 496.3 570.5 496.3 574.1 496.3 577.7 496.3M531.0 500.2 534.6 500.3 538.1 500.4 541.7 500.5 545.3 500.6 548.8 500.7 552.4 500.8 556.0 500.9 559.5 501.1 563.1 501.2 566.6 501.3 570.2 501.4 573.8 501.5 577.3 501.6M531.1 504.3 534.6 504.5 538.1 504.7 541.6 504.9 545.1 505.1 548.6 505.3 552.1 505.4 555.6 505.6 559.1 505.8 562.6 506.0 566.1 506.2 569.6 506.4 573.1 506.6 576.6 506.8M531.2 508.4 534.7 508.6 538.1 508.9 541.5 509.2 544.9 509.5 548.3 509.8 551.8 510.0 555.2 510.3 558.6 510.6 562.0 510.9 565.4 511.2 568.8 511.4 572.3 511.7 575.7 512.0M531.4 512.5 534.7 512.8 538.0 513.2 541.3 513.5 544.7 513.9 548.0 514.3 551.3 514.6 554.6 515.0 558.0 515.3 561.3 515.7 564.6 516.1 567.9 516.4 571.3 516.8 574.6 517.1M531.5 516.5 534.7 517.0 537.9 517.4 541.2 517.9 544.4 518.3 547.6 518.8 550.9 519.2 554.1 519.6 557.3 520.1 560.5 520.5 563.8 521.0 567.0 521.4 570.2 521.9 573.5 522.3M531.6 520.6 534.7 521.2 537.9 521.7 541.0 522.2 544.2 522.7 547.3 523.3 550.4 523.8 553.6 524.3 556.7 524.8 559.9 525.4 563.0 525.9 566.1 526.4 569.3 526.9 572.4 527.5M531.7 524.7 534.8 525.3 537.8 526.0 540.9 526.6 544.0 527.2 547.1 527.8 550.1 528.4 553.2 529.0 556.3 529.6 559.3 530.2 562.4 530.8 565.5 531.4 568.5 532.0 571.6 532.7M531.8 528.8 534.8 529.5 537.8 530.2 540.8 530.9 543.8 531.6 546.8 532.3 549.8 533.0 552.8 533.7 555.8 534.4 558.8 535.1 561.8 535.8 564.8 536.5 567.8 537.2 570.8 537.9M531.9 532.9 534.9 533.7 537.8 534.5 540.7 535.3 543.7 536.0 546.6 536.8 549.5 537.6 552.5 538.4 555.4 539.2 558.3 540.0 561.3 540.7 564.2 541.5 567.1 542.3 570.0 543.1M532.1 537.0 534.9 537.9 537.8 538.7 540.6 539.6 543.5 540.5 546.4 541.3 549.2 542.2 552.1 543.1 555.0 543.9 557.8 544.8 560.7 545.7 563.5 546.6 566.4 547.4 569.3 548.3M532.2 541.1 535.0 542.1 537.8 543.0 540.6 544.0 543.4 544.9 546.1 545.9 548.9 546.8 551.7 547.8 554.5 548.7 557.3 549.7 560.1 550.6 562.9 551.6 565.7 552.5 568.5 553.5M467.2 420.0 465.0 429.6 462.9 439.3 461.4 449.0 460.9 458.9 460.7 468.8 460.6 478.6 460.5 488.5 460.6 498.4 461.9 508.1 464.3 517.7 466.6 527.3 469.0 536.9 471.4 546.5M470.6 420.6 468.6 430.2 466.6 439.8 465.2 449.5 464.7 459.3 464.6 469.1 464.5 478.9 464.4 488.7 464.5 498.5 465.8 508.2 468.0 517.8 470.2 527.3 472.5 536.9 474.8 546.4M474.1 421.2 472.1 430.7 470.3 440.3 469.0 449.9 468.6 459.7 468.5 469.4 468.3 479.2 468.3 488.9 468.4 498.7 469.7 508.3 471.7 517.9 473.9 527.4 476.0 536.9 478.2 546.4M477.5 421.8 475.7 431.3 474.0 440.8 472.8 450.4 472.4 460.1 472.3 469.8 472.2 479.5 472.2 489.2 472.4 498.9 473.5 508.4 475.5 517.9 477.5 527.4 479.5 536.8 481.5 546.3M480.9 422.4 479.3 431.8 477.7 441.3 476.6 450.8 476.3 460.4 476.2 470.1 476.1 479.7 476.1 489.4 476.3 499.0 477.4 508.5 479.2 518.0 481.1 527.4 483.0 536.8 484.9 546.2M484.4 422.9 482.8 432.3 481.4 441.8 480.4 451.3 480.1 460.8 480.1 470.4 480.0 480.0 480.0 489.6 480.2 499.2 481.2 508.6 483.0 518.0 484.7 527.4 486.5 536.8 488.3 546.1M487.8 423.5 486.4 432.9 485.1 442.3 484.2 451.7 483.9 461.2 483.9 470.7 483.9 480.3 483.9 489.8 484.1 499.3 485.1 508.7 486.7 518.1 488.4 527.4 490.0 536.7 491.7 546.1M491.2 424.1 490.0 433.4 488.8 442.8 488.0 452.2 487.8 461.6 487.8 471.1 487.8 480.5 487.8 490.0 488.0 499.5 488.9 508.8 490.4 518.1 492.0 527.4 493.5 536.7 495.1 546.0M494.7 424.7 493.6 434.0 492.5 443.3 491.8 452.6 491.6 462.0 491.6 471.4 491.7 480.8 491.7 490.2 491.9 499.6 492.8 508.9 494.2 518.2 495.6 527.4 497.0 536.7 498.5 545.9M498.1 425.3 497.1 434.5 496.2 443.7 495.6 453.0 495.5 462.4 495.5 471.7 495.5 481.1 495.6 490.4 495.8 499.8 496.6 509.0 497.9 518.2 499.2 527.5 500.5 536.6 501.8 545.8M501.5 425.9 500.7 435.1 499.9 444.2 499.4 453.5 499.3 462.8 499.4 472.1 499.4 481.3 499.5 490.6 499.7 499.9 500.5 509.1 501.6 518.3 502.8 527.5 504.0 536.6 505.2 545.8M505.0 426.5 504.3 435.6 503.6 444.7 503.2 453.9 503.1 463.2 503.2 472.4 503.3 481.6 503.4 490.8 503.7 500.1 504.3 509.2 505.4 518.4 506.5 527.5 507.5 536.6 508.6 545.7M508.4 427.1 507.8 436.2 507.3 445.2 507.0 454.4 507.0 463.5 507.1 472.7 507.2 481.9 507.3 491.0 507.6 500.2 508.2 509.3 509.1 518.4 510.1 527.5 511.0 536.6 512.0 545.6M511.8 427.7 511.4 436.7 511.0 445.7 510.8 454.8 510.8 463.9 511.0 473.0 511.1 482.1 511.3 491.3 511.5 500.4 512.0 509.4 512.9 518.5 513.7 527.5 514.5 536.5 515.4 545.6M515.3 428.2 515.0 437.2 514.7 446.2 514.6 455.3 514.7 464.3 514.8 473.4 515.0 482.4 515.2 491.5 515.4 500.5 515.9 509.5 516.6 518.5 517.3 527.5 518.0 536.5 518.8 545.5M518.7 428.8 518.5 437.8 518.4 446.7 518.4 455.7 518.5 464.7 518.7 473.7 518.9 482.7 519.1 491.7 519.3 500.7 519.7 509.6 520.3 518.6 520.9 527.5 521.5 536.5 522.1 545.4M522.1 429.4 522.1 438.3 522.1 447.2 522.2 456.2 522.3 465.1 522.5 474.0 522.8 483.0 523.0 491.9 523.2 500.8 523.6 509.7 524.1 518.6 524.6 527.5 525.0 536.4 525.5 545.3M525.6 430.0 525.7 438.9 525.8 447.7 526.0 456.6 526.2 465.5 526.4 474.3 526.6 483.2 526.9 492.1 527.1 501.0 527.4 509.8 527.8 518.7 528.2 527.6 528.5 536.4 528.9 545.3M529.0 430.6 529.3 439.4 529.5 448.2 529.8 457.0 530.0 465.9 530.3 474.7 530.5 483.5 530.8 492.3 531.0 501.1 531.3 509.9 531.5 518.8 531.8 527.6 532.0 536.4 532.3 545.2M467.2 420.0 472.0 420.8 476.7 421.6 481.5 422.4 486.2 423.3 491.0 424.1 495.7 424.9 500.5 425.7 505.2 426.5 510.0 427.3 514.7 428.2 519.5 429.0 524.2 429.8 529.0 430.6M466.2 424.5 471.0 425.3 475.9 426.0 480.7 426.8 485.6 427.6 490.4 428.4 495.2 429.2 500.1 430.0 504.9 430.8 509.8 431.5 514.6 432.3 519.4 433.1 524.3 433.9 529.1 434.7M465.2 428.9 470.1 429.7 475.0 430.5 479.9 431.2 484.9 432.0 489.8 432.7 494.7 433.5 499.7 434.2 504.6 435.0 509.5 435.8 514.4 436.5 519.4 437.3 524.3 438.0 529.2 438.8M464.1 433.4 469.1 434.1 474.2 434.9 479.2 435.6 484.2 436.3 489.2 437.0 494.2 437.8 499.2 438.5 504.3 439.2 509.3 440.0 514.3 440.7 519.3 441.4 524.3 442.1 529.4 442.9M463.1 437.9 468.2 438.6 473.3 439.3 478.4 440.0 483.6 440.7 488.7 441.4 493.8 442.1 498.9 442.8 504.0 443.5 509.1 444.2 514.2 444.9 519.3 445.6 524.4 446.3 529.5 447.0M462.3 442.4 467.5 443.1 472.7 443.7 477.8 444.4 483.0 445.1 488.2 445.7 493.4 446.4 498.5 447.1 503.7 447.7 508.9 448.4 514.1 449.1 519.2 449.7 524.4 450.4 529.6 451.1M461.7 446.9 466.9 447.6 472.1 448.2 477.4 448.8 482.6 449.5 487.8 450.1 493.1 450.7 498.3 451.4 503.5 452.0 508.8 452.6 514.0 453.3 519.2 453.9 524.5 454.5 529.7 455.2M461.2 451.5 466.5 452.1 471.8 452.7 477.1 453.3 482.3 453.9 487.6 454.5 492.9 455.1 498.2 455.7 503.4 456.3 508.7 456.9 514.0 457.5 519.3 458.1 524.5 458.7 529.8 459.2M461.0 456.1 466.3 456.6 471.6 457.2 476.9 457.8 482.2 458.3 487.5 458.9 492.8 459.4 498.1 460.0 503.4 460.5 508.7 461.1 514.0 461.7 519.3 462.2 524.6 462.8 529.9 463.3M460.9 460.7 466.2 461.2 471.5 461.7 476.8 462.2 482.2 462.7 487.5 463.3 492.8 463.8 498.1 464.3 503.4 464.8 508.8 465.4 514.1 465.9 519.4 466.4 524.7 466.9 530.1 467.4M460.8 465.2 466.1 465.7 471.5 466.2 476.8 466.7 482.1 467.2 487.5 467.7 492.8 468.1 498.2 468.6 503.5 469.1 508.8 469.6 514.2 470.1 519.5 470.6 524.8 471.0 530.2 471.5M460.7 469.8 466.1 470.3 471.4 470.7 476.8 471.2 482.1 471.6 487.5 472.1 492.8 472.5 498.2 472.9 503.5 473.4 508.9 473.8 514.2 474.3 519.6 474.7 524.9 475.2 530.3 475.6M460.6 474.4 466.0 474.8 471.4 475.2 476.7 475.6 482.1 476.0 487.5 476.5 492.8 476.9 498.2 477.3 503.6 477.7 508.9 478.1 514.3 478.5 519.7 478.9 525.0 479.3 530.4 479.7M460.6 479.0 466.0 479.4 471.3 479.7 476.7 480.1 482.1 480.5 487.5 480.8 492.9 481.2 498.2 481.6 503.6 482.0 509.0 482.3 514.4 482.7 519.8 483.1 525.2 483.4 530.5 483.8M460.5 483.6 465.9 483.9 471.3 484.2 476.7 484.6 482.1 484.9 487.5 485.2 492.9 485.6 498.3 485.9 503.7 486.2 509.1 486.6 514.5 486.9 519.9 487.2 525.3 487.6 530.6 487.9M460.5 488.2 465.9 488.5 471.3 488.8 476.7 489.1 482.1 489.3 487.5 489.6 492.9 489.9 498.3 490.2 503.7 490.5 509.1 490.8 514.5 491.1 520.0 491.4 525.4 491.7 530.8 492.0M460.5 492.8 465.9 493.0 471.3 493.3 476.7 493.5 482.2 493.8 487.6 494.0 493.0 494.3 498.4 494.5 503.8 494.8 509.2 495.1 514.6 495.3 520.1 495.6 525.5 495.8 530.9 496.1M460.6 497.3 466.0 497.6 471.4 497.8 476.8 498.0 482.3 498.2 487.7 498.4 493.1 498.6 498.5 498.9 503.9 499.1 509.3 499.3 514.8 499.5 520.2 499.7 525.6 500.0 531.0 500.2M460.8 501.9 466.2 502.1 471.6 502.3 477.0 502.5 482.4 502.6 487.9 502.8 493.3 503.0 498.7 503.2 504.1 503.4 509.5 503.5 514.9 503.7 520.3 503.9 525.7 504.1 531.1 504.3M461.5 506.4 466.8 506.6 472.2 506.7 477.6 506.9 482.9 507.0 488.3 507.2 493.7 507.3 499.0 507.5 504.4 507.6 509.8 507.8 515.1 507.9 520.5 508.1 525.9 508.2 531.2 508.4M462.6 510.9 467.9 511.0 473.2 511.1 478.5 511.2 483.8 511.4 489.1 511.5 494.4 511.6 499.6 511.7 504.9 511.9 510.2 512.0 515.5 512.1 520.8 512.2 526.1 512.3 531.4 512.5M463.7 515.3 468.9 515.4 474.1 515.5 479.3 515.6 484.5 515.7 489.8 515.8 495.0 515.9 500.2 516.0 505.4 516.1 510.6 516.2 515.8 516.3 521.0 516.4 526.3 516.5 531.5 516.5M464.8 519.8 469.9 519.9 475.0 519.9 480.2 520.0 485.3 520.1 490.5 520.1 495.6 520.2 500.8 520.3 505.9 520.3 511.0 520.4 516.2 520.4 521.3 520.5 526.5 520.6 531.6 520.6M465.9 524.3 470.9 524.3 476.0 524.3 481.1 524.4 486.1 524.4 491.2 524.4 496.3 524.5 501.3 524.5 506.4 524.5 511.5 524.6 516.5 524.6 521.6 524.7 526.6 524.7 531.7 524.7M467.0 528.7 472.0 528.7 476.9 528.7 481.9 528.7 486.9 528.7 491.9 528.8 496.9 528.8 501.9 528.8 506.9 528.8 511.9 528.8 516.9 528.8 521.9 528.8 526.8 528.8 531.8 528.8M468.1 533.2 473.0 533.1 477.9 533.1 482.8 533.1 487.7 533.1 492.6 533.1 497.6 533.0 502.5 533.0 507.4 533.0 512.3 533.0 517.2 533.0 522.1 533.0 527.0 532.9 531.9 532.9M469.2 537.6 474.0 537.6 478.9 537.5 483.7 537.5 488.5 537.4 493.4 537.4 498.2 537.3 503.0 537.3 507.9 537.2 512.7 537.2 517.6 537.1 522.4 537.1 527.2 537.1 532.1 537.0M470.3 542.0 475.1 542.0 479.8 541.9 484.6 541.8 489.3 541.8 494.1 541.7 498.9 541.6 503.6 541.5 508.4 541.5 513.1 541.4 517.9 541.3 522.7 541.3 527.4 541.2 532.2 541.1M471.4 546.5 473.9 551.6 476.3 556.7 478.8 561.8 481.2 567.0 483.8 572.0 486.4 577.0 489.3 581.9 492.3 586.7 495.6 591.4 498.9 596.0 502.3 600.5 505.7 605.1 509.0 609.7M474.8 546.4 477.3 551.3 479.8 556.2 482.2 561.1 484.7 566.0 487.2 570.8 489.9 575.6 492.7 580.3 495.8 584.9 499.0 589.4 502.3 593.8 505.6 598.1 509.0 602.5 512.3 606.9M478.2 546.4 480.7 551.0 483.2 555.7 485.6 560.3 488.1 565.0 490.7 569.6 493.4 574.2 496.2 578.7 499.2 583.0 502.4 587.3 505.6 591.5 509.0 595.7 512.3 599.8 515.5 604.0M481.5 546.3 484.1 550.7 486.6 555.1 489.1 559.6 491.6 564.0 494.1 568.4 496.8 572.8 499.6 577.0 502.6 581.2 505.8 585.3 509.0 589.3 512.3 593.2 515.6 597.2 518.8 601.2M484.9 546.2 487.5 550.4 490.0 554.6 492.5 558.8 495.0 563.0 497.6 567.2 500.3 571.3 503.1 575.4 506.1 579.3 509.2 583.2 512.4 587.0 515.6 590.8 518.9 594.6 522.0 598.4M488.3 546.1 490.9 550.1 493.4 554.1 495.9 558.1 498.4 562.1 501.0 566.0 503.7 569.9 506.5 573.8 509.5 577.5 512.6 581.2 515.7 584.8 518.9 588.3 522.1 591.9 525.3 595.5M491.7 546.1 494.3 549.8 496.8 553.6 499.3 557.3 501.9 561.1 504.5 564.8 507.2 568.5 510.0 572.1 512.9 575.7 516.0 579.1 519.1 582.5 522.3 585.9 525.4 589.3 528.6 592.7M495.1 546.0 497.7 549.5 500.2 553.0 502.8 556.6 505.3 560.1 507.9 563.6 510.6 567.1 513.4 570.5 516.4 573.8 519.4 577.1 522.5 580.3 525.6 583.5 528.7 586.7 531.8 589.9M498.5 545.9 501.1 549.2 503.6 552.5 506.2 555.8 508.8 559.1 511.4 562.4 514.1 565.7 516.9 568.8 519.8 572.0 522.8 575.0 525.8 578.0 528.9 581.0 532.0 584.0 535.1 587.0M501.8 545.8 504.5 548.9 507.0 552.0 509.6 555.1 512.2 558.2 514.8 561.2 517.5 564.2 520.3 567.2 523.2 570.1 526.2 573.0 529.2 575.8 532.3 578.6 535.3 581.4 538.3 584.2M505.2 545.8 507.9 548.6 510.5 551.5 513.0 554.3 515.7 557.2 518.3 560.0 521.0 562.8 523.8 565.6 526.6 568.3 529.6 570.9 532.6 573.5 535.6 576.1 538.6 578.7 541.6 581.4M508.6 545.7 511.3 548.3 513.9 550.9 516.5 553.6 519.1 556.2 521.8 558.8 524.5 561.4 527.2 563.9 530.1 566.4 533.0 568.9 536.0 571.3 538.9 573.7 541.9 576.1 544.9 578.5M512.0 545.6 514.6 548.0 517.3 550.4 519.9 552.8 522.5 555.2 525.2 557.6 527.9 560.0 530.7 562.3 533.5 564.6 536.4 566.8 539.3 569.1 542.3 571.3 545.2 573.5 548.1 575.7M515.4 545.6 518.0 547.7 520.7 549.9 523.3 552.1 526.0 554.2 528.7 556.4 531.4 558.5 534.1 560.7 536.9 562.7 539.8 564.8 542.7 566.8 545.6 568.8 548.5 570.8 551.4 572.9M518.8 545.5 521.4 547.4 524.1 549.4 526.8 551.3 529.4 553.3 532.1 555.2 534.8 557.1 537.6 559.0 540.4 560.9 543.2 562.7 546.1 564.6 548.9 566.4 551.8 568.2 554.7 570.0M522.1 545.4 524.8 547.1 527.5 548.9 530.2 550.6 532.9 552.3 535.6 554.0 538.3 555.7 541.0 557.4 543.8 559.0 546.6 560.7 549.4 562.3 552.3 563.9 555.1 565.6 557.9 567.2M525.5 545.3 528.2 546.8 530.9 548.3 533.6 549.8 536.3 551.3 539.0 552.8 541.7 554.3 544.5 555.7 547.2 557.2 550.0 558.6 552.8 560.1 555.6 561.5 558.4 562.9 561.2 564.4M528.9 545.3 531.6 546.5 534.3 547.8 537.0 549.1 539.8 550.3 542.5 551.6 545.2 552.9 547.9 554.1 550.7 555.4 553.4 556.6 556.2 557.8 558.9 559.1 561.7 560.3 564.4 561.5M532.3 545.2 535.0 546.2 537.7 547.3 540.5 548.3 543.2 549.4 545.9 550.4 548.6 551.4 551.4 552.5 554.1 553.5 556.8 554.5 559.5 555.6 562.3 556.6 565.0 557.7 567.7 558.7M471.4 546.5 476.1 546.4 480.8 546.3 485.5 546.2 490.1 546.1 494.8 546.0 499.5 545.9 504.2 545.8 508.9 545.7 513.6 545.6 518.2 545.5 522.9 545.4 527.6 545.3 532.3 545.2M473.9 551.6 478.6 551.2 483.3 550.8 488.0 550.4 492.7 549.9 497.4 549.5 502.1 549.1 506.8 548.7 511.5 548.3 516.2 547.9 520.9 547.5 525.6 547.1 530.3 546.7 535.0 546.2M476.3 556.7 481.1 556.0 485.8 555.3 490.5 554.5 495.2 553.8 500.0 553.1 504.7 552.4 509.4 551.6 514.1 550.9 518.9 550.2 523.6 549.5 528.3 548.7 533.0 548.0 537.7 547.3M478.8 561.8 483.5 560.8 488.3 559.8 493.0 558.7 497.8 557.7 502.5 556.6 507.2 555.6 512.0 554.6 516.7 553.5 521.5 552.5 526.2 551.4 531.0 550.4 535.7 549.4 540.5 548.3M481.2 567.0 486.0 565.6 490.8 564.2 495.5 562.9 500.3 561.5 505.1 560.2 509.8 558.8 514.6 557.5 519.4 556.1 524.1 554.8 528.9 553.4 533.7 552.1 538.4 550.7 543.2 549.4M483.8 572.0 488.6 570.4 493.3 568.7 498.1 567.0 502.9 565.4 507.7 563.7 512.5 562.0 517.2 560.4 522.0 558.7 526.8 557.1 531.6 555.4 536.4 553.7 541.1 552.1 545.9 550.4M486.4 577.0 491.2 575.1 496.0 573.1 500.8 571.1 505.6 569.2 510.4 567.2 515.1 565.2 519.9 563.3 524.7 561.3 529.5 559.3 534.3 557.3 539.1 555.4 543.9 553.4 548.6 551.4M489.3 581.9 494.1 579.7 498.8 577.4 503.6 575.1 508.4 572.9 513.2 570.6 517.9 568.3 522.7 566.1 527.5 563.8 532.3 561.5 537.0 559.3 541.8 557.0 546.6 554.7 551.4 552.5M492.3 586.7 497.1 584.2 501.8 581.6 506.6 579.1 511.3 576.5 516.1 574.0 520.8 571.4 525.6 568.8 530.3 566.3 535.1 563.7 539.8 561.2 544.6 558.6 549.3 556.1 554.1 553.5M495.6 591.4 500.3 588.6 505.0 585.7 509.7 582.9 514.4 580.1 519.1 577.2 523.8 574.4 528.5 571.6 533.3 568.7 538.0 565.9 542.7 563.1 547.4 560.2 552.1 557.4 556.8 554.5M498.9 596.0 503.6 592.9 508.2 589.8 512.9 586.7 517.6 583.6 522.2 580.5 526.9 577.3 531.5 574.2 536.2 571.1 540.9 568.0 545.5 564.9 550.2 561.8 554.9 558.7 559.5 555.6M502.3 600.5 506.9 597.2 511.5 593.8 516.1 590.4 520.7 587.0 525.4 583.7 530.0 580.3 534.6 576.9 539.2 573.5 543.8 570.1 548.4 566.8 553.0 563.4 557.6 560.0 562.3 556.6M505.7 605.1 510.2 601.5 514.8 597.8 519.4 594.2 523.9 590.5 528.5 586.9 533.0 583.2 537.6 579.6 542.2 575.9 546.7 572.3 551.3 568.6 555.9 565.0 560.4 561.3 565.0 557.7M509.0 609.7 513.5 605.8 518.0 601.9 522.5 597.9 527.1 594.0 531.6 590.1 536.1 586.2 540.6 582.2 545.1 578.3 549.6 574.4 554.2 570.5 558.7 566.5 563.2 562.6 567.7 558.7" fill="none" stroke="#5c5c5c" stroke-width="1"/></g>
<path d="M488.0 373.3 521.8 376.0 539.0 399.7 561.0 414.0 566.9 450.0 577.6 491.8 572.0 530.0 567.7 558.7 509.0 609.7 506.4 606.1 503.8 602.6 501.2 599.1 498.6 595.6 496.0 592.0 493.5 588.4 491.0 584.7 488.6 580.8 486.2 576.8 483.9 572.6 481.5 568.3 479.3 564.0 477.1 559.6 475.0 555.2 473.1 550.8 471.4 546.5 469.9 542.0 468.5 537.4 467.3 532.6 466.2 527.9 465.2 523.3 464.4 519.0 463.6 515.2 462.9 512.0 462.3 509.5 461.9 507.8 461.5 506.6 461.3 505.6 461.1 504.7 460.9 503.6 460.8 502.1 460.7 500.0 460.6 497.2 460.5 494.0 460.5 490.4 460.5 486.6 460.5 482.7 460.6 478.8 460.6 475.0 460.7 471.5 460.8 468.2 460.8 464.9 460.8 461.7 460.9 458.5 461.0 455.3 461.2 452.2 461.4 449.0 461.8 445.8 462.2 442.6 462.8 439.3 463.4 436.0 464.0 432.8 464.8 429.5 465.5 426.3 466.3 423.1 467.2 420.0 468.1 416.9 469.0 413.9 470.0 411.0 471.0 408.0 472.1 405.1 473.2 402.2 474.4 399.3 475.7 396.4 477.3 393.1 478.9 389.8 480.7 386.5 482.5 383.2 484.4 379.9 486.2 376.6 488.0 373.3Z" fill="none" stroke="#5a5a5a" stroke-width="1"/>
<path d="M488.0 373.3 521.8 376.0 539.0 399.7 561.0 414.0 566.9 450.0 577.6 491.8 572.0 530.0 567.7 558.7 509.0 609.7" fill="none" stroke="#ff6424" stroke-width="2.2" stroke-linejoin="round" stroke-linecap="round"/>
<clipPath id="cL"><path d="M152.9 400.3 221.0 420.5 231.9 487.6 241.5 539.6 188.8 581.8 186.8 579.5 184.8 577.2 182.8 574.9 180.7 572.5 178.7 570.2 176.6 567.9 174.5 565.6 172.5 563.2 170.5 560.9 168.6 558.6 166.8 556.3 165.1 554.1 163.4 551.8 161.9 549.6 160.5 547.4 159.2 545.2 157.9 543.0 156.7 540.9 155.6 538.7 154.6 536.6 153.6 534.5 152.7 532.4 151.8 530.3 151.0 528.2 150.2 526.1 149.4 523.9 148.7 521.8 148.0 519.7 147.3 517.6 146.7 515.4 146.2 513.2 145.6 511.0 145.2 508.8 144.8 506.5 144.4 504.3 144.0 502.2 143.7 500.0 143.4 497.9 143.1 495.8 142.9 493.8 142.6 491.8 142.4 489.9 142.2 488.1 142.0 486.3 141.9 484.6 141.8 483.0 141.7 481.4 141.7 479.8 141.6 478.3 141.6 476.8 141.6 475.2 141.6 473.7 141.7 472.2 141.7 470.6 141.8 469.0 141.8 467.4 141.9 465.7 141.9 464.0 142.0 462.3 142.1 460.6 142.2 458.9 142.3 457.2 142.5 455.4 142.6 453.7 142.8 452.0 143.0 450.2 143.1 448.5 143.3 446.8 143.5 445.2 143.7 443.5 143.9 441.9 144.1 440.3 144.3 438.6 144.6 437.1 144.8 435.5 145.1 433.9 145.3 432.3 145.6 430.8 145.9 429.2 146.2 427.7 146.5 426.1 146.8 424.6 147.1 423.0 147.4 421.5 147.8 419.8 148.1 418.2 148.5 416.6 149.0 414.9 149.4 413.3 149.8 411.7 150.3 410.0 150.7 408.4 151.1 406.8 151.6 405.2 152.0 403.6 152.5 401.9 152.9 400.3Z"/></clipPath>
<g clip-path="url(#cL)"><path d="M155 437 C157 431 168 430 180 432 C187 440 195 470 203 495 C207 507 212 518 210 528 C206 537 196 540 189 537 C180 527 170 505 163 485 C158 470 154 450 155 437 Z" fill="#3fe03c" filter="url(#gblur)"/><path d="M152.9 400.3 149.0 414.9 145.8 429.6 143.6 444.5 142.2 459.6 141.6 474.6 142.4 489.7 144.4 504.7 147.9 519.3 153.2 533.5 160.1 546.8 169.0 559.0 178.9 570.4 188.8 581.8M157.2 401.6 153.6 415.8 150.7 430.2 148.7 444.8 147.5 459.4 147.1 474.1 147.8 488.8 149.9 503.4 153.2 517.7 158.3 531.6 164.9 544.7 173.3 556.7 182.7 567.9 192.1 579.2M161.4 402.8 158.2 416.7 155.6 430.8 153.8 445.0 152.8 459.3 152.5 473.6 153.3 487.9 155.3 502.2 158.5 516.2 163.3 529.7 169.7 542.5 177.6 554.3 186.5 565.4 195.4 576.5M165.7 404.1 162.8 417.6 160.5 431.4 158.9 445.2 158.1 459.1 157.9 473.1 158.8 487.1 160.7 500.9 163.8 514.6 168.4 527.8 174.4 540.3 181.9 552.0 190.3 562.9 198.7 573.9M169.9 405.4 167.3 418.6 165.3 431.9 164.0 445.4 163.4 459.0 163.3 472.6 164.3 486.2 166.2 499.7 169.2 513.0 173.5 525.9 179.2 538.2 186.2 549.6 194.1 560.4 202.0 571.3M174.2 406.6 171.9 419.5 170.2 432.5 169.2 445.6 168.6 458.8 168.7 472.1 169.7 485.3 171.6 498.4 174.5 511.4 178.6 524.0 184.0 536.0 190.6 547.3 197.9 557.9 205.3 568.6M178.4 407.9 176.5 420.4 175.1 433.1 174.3 445.9 173.9 458.7 174.2 471.6 175.2 484.4 177.0 497.2 179.8 509.8 183.7 522.1 188.7 533.8 194.9 544.9 201.7 555.4 208.6 566.0M182.7 409.1 181.1 421.3 180.0 433.7 179.4 446.1 179.2 458.5 179.6 471.0 180.7 483.5 182.5 495.9 185.1 508.2 188.8 520.2 193.5 531.7 199.2 542.5 205.5 552.9 211.9 563.3M186.9 410.4 185.7 422.3 184.9 434.2 184.5 446.3 184.5 458.4 185.0 470.5 186.1 482.6 187.9 494.7 190.4 506.6 193.9 518.3 198.2 529.5 203.5 540.2 209.3 550.5 215.1 560.7M191.2 411.7 190.3 423.2 189.8 434.8 189.6 446.5 189.8 458.2 190.4 470.0 191.6 481.8 193.4 493.5 195.8 505.0 199.0 516.4 203.0 527.3 207.8 537.8 213.1 548.0 218.4 558.1M195.5 412.9 194.9 424.1 194.6 435.4 194.7 446.7 195.1 458.1 195.8 469.5 197.1 480.9 198.8 492.2 201.1 503.4 204.1 514.5 207.8 525.2 212.2 535.5 216.9 545.5 221.7 555.4M199.7 414.2 199.5 425.1 199.5 436.0 199.8 446.9 200.4 458.0 201.3 469.0 202.5 480.0 204.2 491.0 206.4 501.8 209.2 512.6 212.5 523.0 216.5 533.1 220.8 543.0 225.0 552.8M204.0 415.4 204.1 426.0 204.4 436.5 205.0 447.2 205.7 457.8 206.7 468.5 208.0 479.1 209.7 489.7 211.7 500.3 214.3 510.7 217.3 520.9 220.8 530.8 224.6 540.5 228.3 550.2M208.2 416.7 208.7 426.9 209.3 437.1 210.1 447.4 211.0 457.7 212.1 467.9 213.5 478.2 215.1 488.5 217.0 498.7 219.4 508.8 222.1 518.7 225.1 528.4 228.4 538.0 231.6 547.5M212.5 418.0 213.3 427.8 214.2 437.7 215.2 447.6 216.3 457.5 217.5 467.4 218.9 477.3 220.5 487.2 222.4 497.1 224.5 506.9 226.8 516.5 229.4 526.0 232.2 535.5 234.9 544.9M216.7 419.2 217.9 428.8 219.1 438.3 220.3 447.8 221.6 457.4 222.9 466.9 224.4 476.5 226.0 486.0 227.7 495.5 229.6 505.0 231.6 514.4 233.7 523.7 236.0 533.0 238.2 542.2M221.0 420.5 222.5 429.7 224.0 438.9 225.4 448.0 226.9 457.2 228.4 466.4 229.9 475.6 231.4 484.7 233.0 493.9 234.6 503.0 236.3 512.2 238.1 521.3 239.8 530.5 241.5 539.6M152.9 400.3 158.1 401.9 163.4 403.4 168.6 405.0 173.9 406.5 179.1 408.1 184.3 409.6 189.6 411.2 194.8 412.7 200.0 414.3 205.3 415.8 210.5 417.4 215.8 418.9 221.0 420.5M151.5 405.6 156.9 407.0 162.3 408.4 167.7 409.8 173.0 411.2 178.4 412.6 183.8 414.0 189.2 415.4 194.6 416.8 200.0 418.2 205.4 419.6 210.8 421.0 216.1 422.4 221.5 423.8M150.0 410.8 155.6 412.1 161.1 413.3 166.7 414.6 172.2 415.8 177.7 417.1 183.3 418.3 188.8 419.6 194.4 420.9 199.9 422.1 205.5 423.4 211.0 424.6 216.5 425.9 222.1 427.1M148.7 416.1 154.4 417.2 160.0 418.3 165.7 419.4 171.4 420.5 177.1 421.6 182.8 422.7 188.5 423.8 194.2 424.9 199.9 426.0 205.5 427.1 211.2 428.2 216.9 429.3 222.6 430.4M147.4 421.4 153.2 422.3 159.1 423.3 164.9 424.2 170.7 425.2 176.5 426.2 182.4 427.1 188.2 428.1 194.0 429.0 199.8 430.0 205.7 430.9 211.5 431.9 217.3 432.8 223.1 433.8M146.3 426.7 152.3 427.5 158.2 428.3 164.2 429.1 170.1 429.9 176.1 430.7 182.0 431.5 188.0 432.3 193.9 433.1 199.9 433.9 205.8 434.7 211.8 435.5 217.7 436.3 223.7 437.1M145.4 432.1 151.4 432.7 157.5 433.4 163.6 434.0 169.6 434.6 175.7 435.3 181.7 435.9 187.8 436.6 193.9 437.2 199.9 437.8 206.0 438.5 212.1 439.1 218.1 439.8 224.2 440.4M144.5 437.5 150.7 438.0 156.9 438.4 163.0 438.9 169.2 439.4 175.4 439.9 181.5 440.4 187.7 440.8 193.9 441.3 200.0 441.8 206.2 442.3 212.4 442.7 218.6 443.2 224.7 443.7M143.8 442.9 150.0 443.2 156.3 443.5 162.6 443.8 168.8 444.2 175.1 444.5 181.4 444.8 187.6 445.1 193.9 445.4 200.2 445.7 206.5 446.1 212.7 446.4 219.0 446.7 225.3 447.0M143.2 448.3 149.5 448.4 155.9 448.6 162.2 448.8 168.6 448.9 174.9 449.1 181.3 449.2 187.6 449.4 194.0 449.5 200.4 449.7 206.7 449.9 213.1 450.0 219.4 450.2 225.8 450.3M142.6 453.7 149.1 453.7 155.5 453.7 161.9 453.7 168.4 453.7 174.8 453.7 181.3 453.7 187.7 453.7 194.1 453.7 200.6 453.7 207.0 453.7 213.4 453.7 219.9 453.7 226.3 453.6M142.2 459.1 148.7 459.0 155.2 458.8 161.7 458.6 168.2 458.5 174.8 458.3 181.3 458.1 187.8 458.0 194.3 457.8 200.8 457.6 207.3 457.5 213.8 457.3 220.3 457.1 226.8 457.0M141.9 464.6 148.5 464.3 155.1 463.9 161.6 463.6 168.2 463.3 174.8 462.9 181.4 462.6 187.9 462.3 194.5 461.9 201.1 461.6 207.7 461.3 214.2 460.9 220.8 460.6 227.4 460.3M141.7 470.0 148.4 469.5 155.0 469.0 161.6 468.5 168.2 468.1 174.9 467.6 181.5 467.1 188.1 466.6 194.8 466.1 201.4 465.6 208.0 465.1 214.7 464.6 221.3 464.1 227.9 463.6M141.6 475.5 148.3 474.8 155.0 474.2 161.7 473.5 168.3 472.8 175.0 472.2 181.7 471.5 188.4 470.9 195.1 470.2 201.7 469.5 208.4 468.9 215.1 468.2 221.8 467.6 228.5 466.9M141.7 480.9 148.4 480.1 155.1 479.3 161.8 478.5 168.6 477.6 175.3 476.8 182.0 476.0 188.7 475.2 195.4 474.3 202.1 473.5 208.8 472.7 215.6 471.9 222.3 471.0 229.0 470.2M142.0 486.4 148.8 485.4 155.5 484.4 162.2 483.4 169.0 482.4 175.7 481.4 182.4 480.4 189.2 479.5 195.9 478.5 202.6 477.5 209.3 476.5 216.1 475.5 222.8 474.5 229.5 473.5M142.6 491.8 149.4 490.6 156.1 489.5 162.8 488.3 169.5 487.2 176.3 486.0 183.0 484.9 189.7 483.7 196.4 482.6 203.2 481.4 209.9 480.3 216.6 479.1 223.4 478.0 230.1 476.8M143.3 497.2 150.0 495.9 156.7 494.6 163.5 493.3 170.2 492.0 176.9 490.6 183.6 489.3 190.3 488.0 197.0 486.7 203.8 485.4 210.5 484.1 217.2 482.8 223.9 481.5 230.6 480.2M144.1 502.6 150.8 501.1 157.5 499.6 164.2 498.2 170.9 496.7 177.6 495.2 184.3 493.8 191.0 492.3 197.7 490.8 204.4 489.4 211.1 487.9 217.8 486.4 224.5 484.9 231.2 483.5M145.0 508.0 151.7 506.3 158.4 504.7 165.0 503.1 171.7 501.4 178.4 499.8 185.1 498.2 191.7 496.6 198.4 494.9 205.1 493.3 211.7 491.7 218.4 490.0 225.1 488.4 231.8 486.8M146.2 513.3 152.8 511.5 159.4 509.7 166.1 507.9 172.7 506.1 179.3 504.4 185.9 502.6 192.6 500.8 199.2 499.0 205.8 497.2 212.5 495.4 219.1 493.7 225.7 491.9 232.3 490.1M147.6 518.5 154.2 516.6 160.7 514.7 167.3 512.7 173.9 510.8 180.4 508.9 187.0 506.9 193.5 505.0 200.1 503.1 206.7 501.1 213.2 499.2 219.8 497.3 226.3 495.3 232.9 493.4M149.4 523.7 155.8 521.6 162.3 519.5 168.8 517.5 175.2 515.4 181.7 513.3 188.2 511.2 194.7 509.2 201.1 507.1 207.6 505.0 214.1 502.9 220.6 500.9 227.0 498.8 233.5 496.7M151.2 528.8 157.6 526.6 164.0 524.4 170.4 522.2 176.7 519.9 183.1 517.7 189.5 515.5 195.9 513.3 202.2 511.1 208.6 508.9 215.0 506.7 221.3 504.4 227.7 502.2 234.1 500.0M153.3 533.8 159.6 531.5 165.8 529.1 172.1 526.8 178.4 524.4 184.6 522.1 190.9 519.7 197.1 517.4 203.4 515.1 209.7 512.7 215.9 510.4 222.2 508.0 228.4 505.7 234.7 503.3M155.7 538.8 161.8 536.3 167.9 533.8 174.0 531.4 180.2 528.9 186.3 526.4 192.4 523.9 198.5 521.5 204.7 519.0 210.8 516.5 216.9 514.0 223.0 511.6 229.2 509.1 235.3 506.6M158.2 543.6 164.2 541.0 170.2 538.4 176.1 535.8 182.1 533.2 188.1 530.6 194.1 528.0 200.1 525.4 206.0 522.9 212.0 520.3 218.0 517.7 224.0 515.1 229.9 512.5 235.9 509.9M161.0 548.2 166.8 545.6 172.6 542.9 178.5 540.2 184.3 537.5 190.1 534.8 195.9 532.1 201.7 529.4 207.5 526.7 213.3 524.0 219.1 521.3 224.9 518.6 230.7 515.9 236.5 513.2M164.1 552.8 169.7 550.0 175.3 547.2 180.9 544.4 186.6 541.6 192.2 538.8 197.8 536.0 203.4 533.2 209.1 530.4 214.7 527.7 220.3 524.9 225.9 522.1 231.5 519.3 237.2 516.5M167.4 557.1 172.8 554.2 178.2 551.4 183.6 548.5 189.0 545.6 194.5 542.7 199.9 539.9 205.3 537.0 210.7 534.1 216.1 531.3 221.5 528.4 226.9 525.5 232.4 522.7 237.8 519.8M170.9 561.3 176.1 558.4 181.2 555.4 186.4 552.5 191.6 549.5 196.8 546.6 202.0 543.7 207.2 540.7 212.4 537.8 217.6 534.9 222.8 531.9 228.0 529.0 233.2 526.0 238.4 523.1M174.4 565.4 179.4 562.4 184.4 559.4 189.3 556.4 194.3 553.4 199.3 550.4 204.2 547.4 209.2 544.4 214.2 541.4 219.1 538.4 224.1 535.4 229.1 532.4 234.1 529.4 239.0 526.4M178.0 569.5 182.8 566.4 187.5 563.4 192.3 560.3 197.0 557.3 201.7 554.2 206.5 551.1 211.2 548.1 216.0 545.0 220.7 541.9 225.4 538.9 230.2 535.8 234.9 532.8 239.6 529.7M181.7 573.6 186.2 570.4 190.7 567.3 195.2 564.2 199.7 561.1 204.2 558.0 208.7 554.8 213.2 551.7 217.7 548.6 222.2 545.5 226.7 542.4 231.3 539.2 235.8 536.1 240.3 533.0M185.3 577.7 189.5 574.5 193.8 571.3 198.1 568.1 202.4 564.9 206.7 561.8 210.9 558.6 215.2 555.4 219.5 552.2 223.8 549.0 228.1 545.8 232.3 542.7 236.6 539.5 240.9 536.3M188.8 581.8 192.9 578.6 196.9 575.3 201.0 572.1 205.0 568.8 209.1 565.6 213.1 562.3 217.2 559.1 221.2 555.8 225.3 552.6 229.3 549.3 233.4 546.1 237.4 542.8 241.5 539.6" fill="none" stroke="#5c5c5c" stroke-width="1"/></g>
<path d="M152.9 400.3 221.0 420.5 231.9 487.6 241.5 539.6 188.8 581.8 186.8 579.5 184.8 577.2 182.8 574.9 180.7 572.5 178.7 570.2 176.6 567.9 174.5 565.6 172.5 563.2 170.5 560.9 168.6 558.6 166.8 556.3 165.1 554.1 163.4 551.8 161.9 549.6 160.5 547.4 159.2 545.2 157.9 543.0 156.7 540.9 155.6 538.7 154.6 536.6 153.6 534.5 152.7 532.4 151.8 530.3 151.0 528.2 150.2 526.1 149.4 523.9 148.7 521.8 148.0 519.7 147.3 517.6 146.7 515.4 146.2 513.2 145.6 511.0 145.2 508.8 144.8 506.5 144.4 504.3 144.0 502.2 143.7 500.0 143.4 497.9 143.1 495.8 142.9 493.8 142.6 491.8 142.4 489.9 142.2 488.1 142.0 486.3 141.9 484.6 141.8 483.0 141.7 481.4 141.7 479.8 141.6 478.3 141.6 476.8 141.6 475.2 141.6 473.7 141.7 472.2 141.7 470.6 141.8 469.0 141.8 467.4 141.9 465.7 141.9 464.0 142.0 462.3 142.1 460.6 142.2 458.9 142.3 457.2 142.5 455.4 142.6 453.7 142.8 452.0 143.0 450.2 143.1 448.5 143.3 446.8 143.5 445.2 143.7 443.5 143.9 441.9 144.1 440.3 144.3 438.6 144.6 437.1 144.8 435.5 145.1 433.9 145.3 432.3 145.6 430.8 145.9 429.2 146.2 427.7 146.5 426.1 146.8 424.6 147.1 423.0 147.4 421.5 147.8 419.8 148.1 418.2 148.5 416.6 149.0 414.9 149.4 413.3 149.8 411.7 150.3 410.0 150.7 408.4 151.1 406.8 151.6 405.2 152.0 403.6 152.5 401.9 152.9 400.3Z" fill="none" stroke="#5a5a5a" stroke-width="1"/>
<path d="M198.0 417.0 197.7 416.8 197.5 416.7 197.2 416.5 197.0 416.4 196.7 416.2 196.5 416.1 196.2 415.9 196.0 415.7 195.7 415.6 195.5 415.4 195.2 415.2 194.9 415.1 194.7 414.9 194.4 414.7 194.2 414.6 193.9 414.4 193.6 414.2 193.4 414.1 193.1 413.9 192.9 413.8 192.6 413.6 192.4 413.4 192.1 413.3 191.9 413.1 191.6 413.0 191.4 412.8 191.1 412.7 190.9 412.5 190.6 412.4 190.4 412.2 190.1 412.1 189.9 411.9 189.6 411.8 189.4 411.7 189.2 411.6 188.9 411.4 188.7 411.3 188.5 411.2 188.2 411.1 188.0 411.0 187.8 410.9 187.6 410.8 187.3 410.7 187.1 410.6 186.9 410.5 186.7 410.5 186.5 410.4 186.3 410.3 186.1 410.2 185.9 410.1 185.7 410.1 185.5 410.0 185.3 409.9 185.1 409.9 184.9 409.8 184.7 409.8 184.5 409.7 184.3 409.7 184.1 409.6 183.9 409.6 183.7 409.5 183.5 409.5 183.3 409.4 183.1 409.4 182.9 409.4 182.7 409.3 182.5 409.3 182.3 409.3 182.1 409.2 182.0 409.2 181.8 409.2 181.6 409.1 181.4 409.1 181.2 409.1 181.0 409.1 180.8 409.1 180.6 409.0 180.4 409.0 180.2 409.0 180.0 409.0 179.8 409.0 179.6 409.0 179.4 409.0 179.2 409.0 179.0 409.0 178.8 409.0 178.6 409.0 178.4 409.0 178.2 409.0 177.9 409.0 177.7 409.1 177.5 409.1 177.3 409.1 177.1 409.1 176.9 409.2 176.7 409.2 176.5 409.2 176.3 409.3 176.1 409.3 175.9 409.3 175.7 409.4 175.5 409.4 175.3 409.4 175.1 409.5 174.9 409.5 174.7 409.6 174.5 409.6 174.3 409.6 174.1 409.7 173.8 409.7 173.6 409.7 173.4 409.8 173.2 409.8 173.0 409.9 172.8 409.9 172.6 409.9 172.4 409.9 172.2 410.0 172.0 410.0" fill="none" stroke="#6a6a6a" stroke-width="3.4" stroke-linejoin="round"/>
<path d="M172.0 410.0 171.7 411.3 171.3 412.7 171.0 414.0 170.6 415.3 170.3 416.7 169.9 418.0 169.6 419.3 169.2 420.7 168.9 422.0 168.6 423.3 168.2 424.7 167.9 426.0 167.6 427.3 167.3 428.7 167.0 430.0 166.7 431.3 166.4 432.7 166.2 434.0 165.9 435.4 165.6 436.8 165.3 438.1 165.1 439.5 164.8 440.9 164.6 442.2 164.4 443.6 164.2 444.9 164.0 446.2 163.8 447.5 163.6 448.8 163.5 450.0 163.4 451.2 163.3 452.3 163.2 453.4 163.1 454.5 163.0 455.5 163.0 456.5 162.9 457.5 162.9 458.5 162.9 459.6 162.9 460.6 162.9 461.8 162.9 462.9 162.9 464.2 163.0 465.6 163.0 467.0 163.1 468.6 163.1 470.2 163.2 472.0 163.3 473.9 163.4 475.8 163.5 477.7 163.7 479.7 163.8 481.8 163.9 483.8 164.1 485.8 164.3 487.7 164.4 489.7 164.6 491.5 164.8 493.3 165.0 495.0 165.2 496.6 165.4 498.2 165.6 499.7 165.8 501.2 166.1 502.7 166.3 504.1 166.6 505.5 166.8 506.9 167.1 508.2 167.4 509.6 167.7 510.9 168.0 512.2 168.3 513.5 168.6 514.7 169.0 516.0 169.4 517.3 169.8 518.5 170.2 519.7 170.6 520.9 171.1 522.1 171.5 523.3 172.0 524.4 172.5 525.6 173.0 526.7 173.5 527.8 174.0 528.9 174.5 529.9 175.0 531.0 175.5 532.0 176.0 533.0 176.5 534.0 176.9 534.9 177.4 535.7 177.8 536.5 178.2 537.3 178.7 538.0 179.1 538.8 179.6 539.5 180.1 540.3 180.6 541.1 181.1 541.9 181.8 542.8 182.4 543.8 183.2 544.9 184.0 546.0 185.0 547.3 186.0 548.8 187.2 550.3 188.4 551.8 189.6 553.5 190.9 555.2 192.2 556.9 193.6 558.6 195.0 560.4 196.4 562.1 197.7 563.9 199.1 565.6 200.4 567.3 201.7 569.0" fill="none" stroke="#6a6a6a" stroke-width="3.4" stroke-linejoin="round"/>
<path d="M198.0 417.0 198.2 418.2 198.4 419.3 198.6 420.5 198.8 421.7 199.0 422.8 199.2 424.0 199.5 425.2 199.7 426.3 199.9 427.5 200.1 428.7 200.3 429.8 200.5 431.0 200.7 432.2 200.9 433.3 201.1 434.5 201.3 435.7 201.5 436.8 201.8 438.0 202.0 439.2 202.2 440.3 202.4 441.5 202.6 442.7 202.8 443.8 203.0 445.0 203.2 446.2 203.4 447.3 203.6 448.5 203.8 449.7 204.0 450.9 204.2 452.1 204.5 453.3 204.7 454.4 204.9 455.6 205.1 456.8 205.3 458.0 205.5 459.2 205.7 460.4 205.9 461.5 206.1 462.7 206.3 463.9 206.5 465.1 206.8 466.2 207.0 467.4 207.2 468.5 207.4 469.6 207.6 470.8 207.8 471.9 208.0 473.0 208.2 474.1 208.4 475.2 208.6 476.3 208.8 477.4 209.0 478.4 209.2 479.5 209.4 480.5 209.6 481.6 209.9 482.6 210.1 483.7 210.3 484.7 210.5 485.8 210.7 486.8 210.9 487.8 211.1 488.8 211.3 489.9 211.5 490.9 211.7 491.9 211.9 492.9 212.1 493.9 212.4 494.9 212.6 496.0 212.8 497.0 213.0 498.0 213.2 499.0 213.4 500.0 213.7 501.0 213.9 502.0 214.1 503.0 214.3 504.0 214.6 504.9 214.8 505.9 215.0 506.9 215.3 507.8 215.5 508.8 215.7 509.8 216.0 510.7 216.2 511.7 216.4 512.7 216.6 513.7 216.9 514.7 217.1 515.7 217.3 516.7 217.6 517.7 217.8 518.8 218.0 519.8 218.3 520.9 218.5 522.0 218.7 523.2 219.0 524.3 219.2 525.5 219.5 526.7 219.7 528.0 219.9 529.2 220.2 530.5 220.4 531.7 220.7 533.0 220.9 534.3 221.1 535.5 221.4 536.8 221.6 538.1 221.8 539.4 222.1 540.7 222.3 542.0 222.6 543.3 222.8 544.6 223.0 545.9 223.3 547.2 223.5 548.5 223.8 549.7 224.0 551.0" fill="none" stroke="#6a6a6a" stroke-width="3.4" stroke-linejoin="round"/>
<path d="M224.0 551.0 223.8 551.2 223.6 551.3 223.4 551.5 223.3 551.6 223.1 551.8 222.9 551.9 222.7 552.1 222.5 552.2 222.3 552.4 222.1 552.5 221.9 552.7 221.8 552.8 221.6 553.0 221.4 553.1 221.2 553.3 221.0 553.4 220.8 553.6 220.6 553.7 220.4 553.9 220.3 554.0 220.1 554.2 219.9 554.3 219.7 554.5 219.5 554.6 219.3 554.8 219.1 554.9 218.9 555.1 218.8 555.2 218.6 555.4 218.4 555.5 218.2 555.7 218.0 555.8 217.8 556.0 217.6 556.1 217.4 556.3 217.3 556.4 217.1 556.6 216.9 556.7 216.7 556.9 216.5 557.1 216.3 557.2 216.1 557.4 215.9 557.5 215.8 557.7 215.6 557.8 215.4 558.0 215.2 558.1 215.0 558.3 214.8 558.4 214.6 558.6 214.4 558.7 214.3 558.9 214.1 559.0 213.9 559.2 213.7 559.3 213.5 559.5 213.3 559.6 213.1 559.8 212.9 559.9 212.8 560.1 212.6 560.2 212.4 560.4 212.2 560.5 212.0 560.7 211.8 560.8 211.6 561.0 211.4 561.1 211.3 561.3 211.1 561.4 210.9 561.6 210.7 561.7 210.5 561.9 210.3 562.0 210.1 562.2 209.9 562.3 209.8 562.5 209.6 562.6 209.4 562.8 209.2 562.9 209.0 563.1 208.8 563.3 208.6 563.4 208.4 563.6 208.3 563.7 208.1 563.9 207.9 564.0 207.7 564.2 207.5 564.3 207.3 564.5 207.1 564.6 206.9 564.8 206.8 564.9 206.6 565.1 206.4 565.2 206.2 565.4 206.0 565.5 205.8 565.7 205.6 565.8 205.4 566.0 205.3 566.1 205.1 566.3 204.9 566.4 204.7 566.6 204.5 566.7 204.3 566.9 204.1 567.0 203.9 567.2 203.8 567.3 203.6 567.5 203.4 567.6 203.2 567.8 203.0 567.9 202.8 568.1 202.6 568.2 202.4 568.4 202.3 568.5 202.1 568.7 201.9 568.8 201.7 569.0" fill="none" stroke="#6a6a6a" stroke-width="3.4" stroke-linejoin="round"/>
<path d="M152.9 400.3 221.0 420.5 231.9 487.6 241.5 539.6 188.8 581.8" fill="none" stroke="#ff6424" stroke-width="2.2" stroke-linejoin="round" stroke-linecap="round"/>
<clipPath id="cM"><path d="M347.9 405.4 402.6 448.3 389.7 510.0 379.6 567.2 313.6 586.5 312.8 584.2 312.0 581.9 311.2 579.7 310.3 577.4 309.4 575.2 308.6 572.9 307.7 570.7 306.9 568.4 306.1 566.1 305.3 563.8 304.6 561.5 304.0 559.1 303.4 556.7 302.9 554.3 302.5 551.8 302.1 549.2 301.8 546.6 301.5 544.0 301.3 541.3 301.1 538.5 301.0 535.8 300.9 533.1 300.8 530.4 300.8 527.8 300.7 525.2 300.7 522.7 300.7 520.2 300.7 517.9 300.7 515.6 300.8 513.4 300.8 511.3 300.9 509.2 301.1 507.1 301.2 505.1 301.4 503.1 301.6 501.2 301.8 499.3 302.0 497.4 302.2 495.5 302.4 493.7 302.7 491.8 302.9 490.0 303.1 488.2 303.3 486.4 303.6 484.7 303.8 483.0 304.0 481.4 304.3 479.7 304.5 478.1 304.8 476.5 305.1 474.9 305.4 473.2 305.8 471.6 306.2 469.9 306.7 468.2 307.2 466.5 307.8 464.7 308.4 462.9 309.0 461.1 309.7 459.2 310.4 457.3 311.1 455.4 311.9 453.5 312.7 451.6 313.5 449.8 314.3 447.9 315.2 446.1 316.1 444.3 317.0 442.5 317.9 440.8 318.8 439.1 319.8 437.4 320.8 435.8 321.9 434.1 322.9 432.5 324.0 430.9 325.1 429.3 326.2 427.8 327.4 426.2 328.5 424.8 329.6 423.3 330.7 421.9 331.8 420.6 332.9 419.3 334.1 418.0 335.2 416.7 336.4 415.6 337.5 414.5 338.7 413.4 339.8 412.4 341.0 411.4 342.1 410.4 343.3 409.4 344.4 408.5 345.6 407.5 346.7 406.4 347.9 405.4Z"/></clipPath>
<g clip-path="url(#cM)"><path d="M347.9 405.4 336.5 415.4 326.8 427.0 318.5 439.7 312.0 453.4 306.9 467.6 303.9 482.5 302.0 497.5 300.8 512.6 300.8 527.8 301.4 542.9 303.7 557.9 308.3 572.3 313.6 586.5M351.3 408.1 340.5 418.0 331.3 429.5 323.4 441.9 317.1 455.3 312.2 469.3 309.3 483.7 307.4 498.4 306.2 513.2 306.1 527.9 306.6 542.7 308.6 557.3 312.9 571.4 317.7 585.3M354.7 410.8 344.5 420.7 335.8 432.0 328.3 444.2 322.3 457.3 317.6 470.9 314.8 485.0 312.9 499.3 311.6 513.7 311.4 528.1 311.8 542.5 313.6 556.7 317.4 570.5 321.9 584.1M358.2 413.4 348.6 423.3 340.3 434.4 333.2 446.4 327.5 459.2 323.0 472.5 320.2 486.3 318.3 500.2 317.1 514.2 316.7 528.3 317.0 542.3 318.5 556.2 322.0 569.6 326.0 582.9M361.6 416.1 352.6 425.9 344.8 436.9 338.1 448.7 332.7 461.2 328.4 474.2 325.7 487.6 323.8 501.2 322.5 514.8 322.1 528.4 322.2 542.1 323.4 555.6 326.5 568.7 330.1 581.7M365.0 418.8 356.6 428.5 349.3 439.4 343.0 450.9 337.9 463.2 333.8 475.8 331.1 488.9 329.3 502.1 327.9 515.3 327.4 528.6 327.3 541.9 328.4 555.1 331.1 567.8 334.2 580.5M368.4 421.5 360.6 431.2 353.8 441.8 347.9 453.2 343.0 465.1 339.1 477.5 336.6 490.2 334.7 503.0 333.3 515.9 332.7 528.8 332.5 541.7 333.3 554.5 335.7 566.9 338.4 579.3M371.8 424.2 364.6 433.8 358.3 444.3 352.8 455.4 348.2 467.1 344.5 479.1 342.0 491.4 340.2 503.9 338.8 516.4 338.0 528.9 337.7 541.5 338.3 553.9 340.2 566.0 342.5 578.1M375.2 426.8 368.6 436.4 362.8 446.8 357.6 457.7 353.4 469.1 349.9 480.7 347.5 492.7 345.6 504.8 344.2 517.0 343.3 529.1 342.9 541.3 343.2 553.4 344.8 565.2 346.6 576.8M378.7 429.5 372.6 439.0 367.3 449.2 362.5 459.9 358.6 471.0 355.3 482.4 352.9 494.0 351.1 505.7 349.6 517.5 348.7 529.3 348.1 541.1 348.2 552.8 349.3 564.3 350.7 575.6M382.1 432.2 376.6 441.7 371.8 451.7 367.4 462.2 363.8 473.0 360.7 484.0 358.4 495.3 356.5 506.7 355.0 518.0 354.0 529.5 353.3 540.9 353.1 552.2 353.9 563.4 354.8 574.4M385.5 434.9 380.6 444.3 376.3 454.2 372.3 464.4 368.9 474.9 366.0 485.7 363.8 496.6 362.0 507.6 360.5 518.6 359.3 529.6 358.4 540.7 358.1 551.7 358.4 562.5 359.0 573.2M388.9 437.6 384.6 446.9 380.7 456.6 377.2 466.7 374.1 476.9 371.4 487.3 369.3 497.9 367.5 508.5 365.9 519.1 364.6 529.8 363.6 540.5 363.0 551.1 363.0 561.6 363.1 572.0M392.3 440.3 388.6 449.5 385.2 459.1 382.1 468.9 379.3 478.9 376.8 489.0 374.7 499.2 372.9 509.4 371.3 519.7 370.0 530.0 368.8 540.3 367.9 550.5 367.5 560.7 367.2 570.8M395.8 442.9 392.7 452.2 389.7 461.6 387.0 471.1 384.5 480.8 382.2 490.6 380.2 500.4 378.4 510.3 376.7 520.2 375.3 530.1 374.0 540.1 372.9 550.0 372.1 559.8 371.3 569.6M399.2 445.6 396.7 454.8 394.2 464.1 391.9 473.4 389.7 482.8 387.6 492.2 385.6 501.7 383.8 511.2 382.2 520.8 380.6 530.3 379.2 539.9 377.8 549.4 376.6 558.9 375.5 568.4M402.6 448.3 400.7 457.4 398.7 466.5 396.8 475.6 394.8 484.8 392.9 493.9 391.1 503.0 389.3 512.1 387.6 521.3 385.9 530.5 384.3 539.7 382.8 548.8 381.2 558.0 379.6 567.2M347.9 405.4 352.1 408.7 356.3 412.0 360.5 415.3 364.7 418.6 368.9 421.9 373.1 425.2 377.4 428.5 381.6 431.8 385.8 435.1 390.0 438.4 394.2 441.7 398.4 445.0 402.6 448.3M343.8 409.0 348.3 412.3 352.7 415.6 357.2 418.8 361.7 422.1 366.1 425.4 370.6 428.7 375.1 431.9 379.6 435.2 384.0 438.5 388.5 441.8 393.0 445.0 397.4 448.3 401.9 451.6M339.6 412.6 344.4 415.8 349.1 419.1 353.8 422.3 358.6 425.6 363.3 428.8 368.0 432.1 372.8 435.3 377.5 438.6 382.3 441.9 387.0 445.1 391.7 448.4 396.5 451.6 401.2 454.9M335.6 416.3 340.6 419.5 345.6 422.7 350.6 426.0 355.6 429.2 360.6 432.4 365.6 435.6 370.6 438.9 375.6 442.1 380.6 445.3 385.5 448.5 390.5 451.7 395.5 455.0 400.5 458.2M332.0 420.4 337.2 423.5 342.4 426.7 347.6 429.9 352.9 433.0 358.1 436.2 363.3 439.3 368.5 442.5 373.7 445.7 378.9 448.8 384.2 452.0 389.4 455.1 394.6 458.3 399.8 461.5M328.6 424.7 334.0 427.7 339.4 430.8 344.8 433.9 350.3 437.0 355.7 440.1 361.1 443.2 366.6 446.3 372.0 449.3 377.4 452.4 382.8 455.5 388.3 458.6 393.7 461.7 399.1 464.8M325.3 429.1 330.9 432.1 336.6 435.1 342.2 438.1 347.8 441.1 353.4 444.1 359.0 447.1 364.7 450.1 370.3 453.1 375.9 456.1 381.5 459.0 387.2 462.0 392.8 465.0 398.4 468.0M322.2 433.6 328.0 436.5 333.8 439.4 339.6 442.3 345.5 445.2 351.3 448.1 357.1 451.0 362.9 453.9 368.7 456.8 374.5 459.7 380.3 462.6 386.1 465.5 391.9 468.4 397.7 471.3M319.3 438.2 325.3 441.0 331.3 443.8 337.3 446.6 343.2 449.4 349.2 452.2 355.2 455.0 361.2 457.8 367.1 460.6 373.1 463.4 379.1 466.2 385.1 469.0 391.0 471.8 397.0 474.6M316.7 443.0 322.8 445.7 329.0 448.4 335.1 451.1 341.2 453.8 347.3 456.5 353.4 459.1 359.6 461.8 365.7 464.5 371.8 467.2 377.9 469.9 384.1 472.6 390.2 475.2 396.3 477.9M314.3 448.0 320.6 450.5 326.8 453.1 333.1 455.6 339.3 458.2 345.6 460.7 351.8 463.3 358.1 465.9 364.3 468.4 370.6 471.0 376.8 473.5 383.1 476.1 389.3 478.6 395.6 481.2M312.1 453.0 318.5 455.4 324.9 457.8 331.2 460.2 337.6 462.7 344.0 465.1 350.3 467.5 356.7 469.9 363.1 472.4 369.4 474.8 375.8 477.2 382.2 479.6 388.5 482.1 394.9 484.5M310.1 458.0 316.6 460.3 323.0 462.6 329.5 464.9 336.0 467.2 342.4 469.5 348.9 471.8 355.4 474.1 361.9 476.4 368.3 478.6 374.8 480.9 381.3 483.2 387.7 485.5 394.2 487.8M308.3 463.2 314.8 465.3 321.4 467.5 327.9 469.6 334.5 471.8 341.0 473.9 347.6 476.1 354.2 478.2 360.7 480.4 367.3 482.5 373.8 484.7 380.4 486.8 387.0 488.9 393.5 491.1M306.6 468.4 313.3 470.4 319.9 472.4 326.5 474.4 333.2 476.4 339.8 478.4 346.4 480.4 353.1 482.4 359.7 484.4 366.3 486.4 372.9 488.4 379.6 490.4 386.2 492.4 392.8 494.4M305.3 473.7 312.0 475.6 318.7 477.4 325.4 479.3 332.1 481.1 338.7 482.9 345.4 484.8 352.1 486.6 358.8 488.5 365.4 490.3 372.1 492.2 378.8 494.0 385.5 495.8 392.2 497.7M304.4 479.1 311.1 480.8 317.8 482.5 324.5 484.2 331.2 485.9 337.9 487.5 344.6 489.2 351.3 490.9 358.0 492.6 364.7 494.3 371.4 495.9 378.1 497.6 384.8 499.3 391.5 501.0M303.6 484.5 310.3 486.1 317.0 487.6 323.7 489.1 330.4 490.6 337.1 492.1 343.9 493.7 350.6 495.2 357.3 496.7 364.0 498.2 370.7 499.7 377.4 501.2 384.1 502.8 390.8 504.3M302.9 490.0 309.6 491.3 316.3 492.7 323.0 494.0 329.8 495.4 336.5 496.7 343.2 498.1 349.9 499.5 356.6 500.8 363.3 502.2 370.0 503.5 376.7 504.9 383.5 506.2 390.2 507.6M302.2 495.4 308.9 496.6 315.7 497.8 322.4 499.0 329.1 500.2 335.8 501.4 342.5 502.5 349.2 503.7 356.0 504.9 362.7 506.1 369.4 507.3 376.1 508.5 382.8 509.7 389.5 510.9M301.6 500.9 308.3 501.9 315.0 502.9 321.8 503.9 328.5 505.0 335.2 506.0 341.9 507.0 348.6 508.0 355.3 509.1 362.0 510.1 368.8 511.1 375.5 512.1 382.2 513.2 388.9 514.2M301.1 506.3 307.8 507.2 314.5 508.0 321.2 508.9 327.9 509.7 334.7 510.6 341.4 511.5 348.1 512.3 354.8 513.2 361.5 514.0 368.2 514.9 374.9 515.8 381.6 516.6 388.3 517.5M300.8 511.8 307.5 512.5 314.2 513.2 320.9 513.8 327.5 514.5 334.2 515.2 340.9 515.9 347.6 516.6 354.3 517.3 360.9 518.0 367.6 518.7 374.3 519.4 381.0 520.1 387.7 520.8M300.7 517.2 307.3 517.8 314.0 518.3 320.6 518.8 327.3 519.4 333.9 519.9 340.6 520.4 347.2 520.9 353.9 521.5 360.5 522.0 367.1 522.5 373.8 523.0 380.4 523.6 387.1 524.1M300.7 522.7 307.3 523.1 313.9 523.4 320.5 523.8 327.1 524.2 333.7 524.5 340.3 524.9 346.9 525.2 353.5 525.6 360.1 526.0 366.7 526.3 373.3 526.7 379.9 527.1 386.5 527.4M300.8 528.2 307.3 528.4 313.9 528.6 320.4 528.8 327.0 529.0 333.5 529.2 340.1 529.4 346.6 529.6 353.2 529.8 359.7 529.9 366.2 530.1 372.8 530.3 379.3 530.5 385.9 530.7M300.9 533.7 307.4 533.7 313.9 533.7 320.4 533.7 326.9 533.8 333.4 533.8 339.9 533.8 346.4 533.9 352.8 533.9 359.3 533.9 365.8 534.0 372.3 534.0 378.8 534.0 385.3 534.0M301.2 539.1 307.6 539.0 314.0 538.9 320.5 538.7 326.9 538.6 333.3 538.4 339.7 538.3 346.2 538.2 352.6 538.0 359.0 537.9 365.5 537.8 371.9 537.6 378.3 537.5 384.7 537.4M301.6 544.6 307.9 544.3 314.3 544.0 320.6 543.7 327.0 543.4 333.3 543.1 339.7 542.8 346.1 542.5 352.4 542.2 358.8 541.9 365.1 541.6 371.5 541.3 377.8 541.0 384.2 540.7M302.2 550.0 308.5 549.6 314.7 549.1 321.0 548.6 327.3 548.2 333.5 547.7 339.8 547.2 346.0 546.8 352.3 546.3 358.6 545.8 364.8 545.4 371.1 544.9 377.3 544.5 383.6 544.0M303.1 555.4 309.3 554.8 315.4 554.2 321.6 553.5 327.7 552.9 333.9 552.3 340.0 551.7 346.1 551.0 352.3 550.4 358.4 549.8 364.6 549.2 370.7 548.6 376.9 547.9 383.0 547.3M304.4 560.7 310.4 560.0 316.4 559.2 322.4 558.4 328.4 557.6 334.4 556.8 340.4 556.1 346.4 555.3 352.4 554.5 358.5 553.7 364.5 553.0 370.5 552.2 376.5 551.4 382.5 550.6M306.0 566.0 311.9 565.0 317.7 564.1 323.5 563.2 329.4 562.3 335.2 561.3 341.1 560.4 346.9 559.5 352.7 558.6 358.6 557.6 364.4 556.7 370.2 555.8 376.1 554.9 381.9 553.9M307.9 571.1 313.5 570.0 319.2 569.0 324.8 567.9 330.5 566.8 336.1 565.8 341.8 564.7 347.4 563.6 353.1 562.6 358.7 561.5 364.4 560.5 370.0 559.4 375.7 558.3 381.3 557.3M309.8 576.2 315.3 575.0 320.7 573.8 326.2 572.6 331.7 571.4 337.1 570.2 342.6 569.0 348.0 567.8 353.5 566.6 358.9 565.4 364.4 564.2 369.8 563.0 375.3 561.8 380.8 560.6M311.8 581.3 317.0 580.0 322.3 578.7 327.6 577.3 332.8 576.0 338.1 574.6 343.3 573.3 348.6 571.9 353.9 570.6 359.1 569.3 364.4 567.9 369.7 566.6 374.9 565.2 380.2 563.9M313.6 586.5 318.7 585.0 323.8 583.5 328.8 582.0 333.9 580.6 339.0 579.1 344.1 577.6 349.1 576.1 354.2 574.6 359.3 573.1 364.4 571.7 369.4 570.2 374.5 568.7 379.6 567.2" fill="none" stroke="#5c5c5c" stroke-width="1"/></g>
<path d="M347.9 405.4 402.6 448.3 389.7 510.0 379.6 567.2 313.6 586.5 312.8 584.2 312.0 581.9 311.2 579.7 310.3 577.4 309.4 575.2 308.6 572.9 307.7 570.7 306.9 568.4 306.1 566.1 305.3 563.8 304.6 561.5 304.0 559.1 303.4 556.7 302.9 554.3 302.5 551.8 302.1 549.2 301.8 546.6 301.5 544.0 301.3 541.3 301.1 538.5 301.0 535.8 300.9 533.1 300.8 530.4 300.8 527.8 300.7 525.2 300.7 522.7 300.7 520.2 300.7 517.9 300.7 515.6 300.8 513.4 300.8 511.3 300.9 509.2 301.1 507.1 301.2 505.1 301.4 503.1 301.6 501.2 301.8 499.3 302.0 497.4 302.2 495.5 302.4 493.7 302.7 491.8 302.9 490.0 303.1 488.2 303.3 486.4 303.6 484.7 303.8 483.0 304.0 481.4 304.3 479.7 304.5 478.1 304.8 476.5 305.1 474.9 305.4 473.2 305.8 471.6 306.2 469.9 306.7 468.2 307.2 466.5 307.8 464.7 308.4 462.9 309.0 461.1 309.7 459.2 310.4 457.3 311.1 455.4 311.9 453.5 312.7 451.6 313.5 449.8 314.3 447.9 315.2 446.1 316.1 444.3 317.0 442.5 317.9 440.8 318.8 439.1 319.8 437.4 320.8 435.8 321.9 434.1 322.9 432.5 324.0 430.9 325.1 429.3 326.2 427.8 327.4 426.2 328.5 424.8 329.6 423.3 330.7 421.9 331.8 420.6 332.9 419.3 334.1 418.0 335.2 416.7 336.4 415.6 337.5 414.5 338.7 413.4 339.8 412.4 341.0 411.4 342.1 410.4 343.3 409.4 344.4 408.5 345.6 407.5 346.7 406.4 347.9 405.4Z" fill="none" stroke="#5a5a5a" stroke-width="1"/>
<path d="M330.7 575.8 329.7 572.5 328.7 569.4 327.7 566.2 326.7 563.1 325.7 559.7 324.9 556.1 324.3 552.2 323.8 547.7 323.4 542.7 323.2 537.5 323.0 532.1 323.0 526.9 323.0 522.1 323.2 517.9 323.5 514.4 324.0 511.4 324.6 508.8 325.3 506.4 326.0 504.0 326.8 501.4 327.5 498.6 328.2 495.4 328.9 492.1 329.6 488.7 330.3 485.3 331.1 481.8 332.0 478.4 332.9 475.1 333.9 471.9 335.1 468.7 336.3 465.6 337.5 462.6 338.8 459.5 340.1 456.5 341.5 453.6 342.9 450.7 344.5 447.8 346.0 444.9 347.7 442.2 349.2 439.4 350.8 436.8 352.2 434.3 353.5 431.8 354.7 429.1 355.9 426.6 357.1 424.2 358.3 422.1 359.5 420.4 360.8 419.3 362.2 418.9 363.8 419.0 365.4 419.6 367.0 420.4 368.5 421.5 370.1 422.6 371.5 423.6 372.9 424.6 374.2 425.8 375.5 427.1 376.8 428.4 377.9 429.8 379.0 431.0 380.0 432.2 380.9 433.1 381.7 433.8 382.5 434.3 383.1 434.9 383.7 435.7 384.1 436.9 384.3 438.6 384.4 440.9 384.3 443.6 384.1 446.6 383.7 449.9 383.3 453.3 382.8 456.7 382.2 460.0 381.5 463.2 380.7 466.5 379.8 469.8 378.8 473.2 377.8 476.6 376.8 480.1 375.8 483.6 374.9 487.3 373.9 491.4 372.9 495.5 371.9 499.5 371.0 503.4 370.1 506.9 369.3 510.0 368.6 512.3 367.8 514.0 367.2 515.3 366.6 516.5 366.0 517.8 365.5 519.6 365.0 522.2 364.6 525.7 364.2 529.9 363.9 534.5 363.6 539.3 363.4 544.0 363.1 548.4 362.9 552.2 362.7 555.8 362.5 558.9 362.3 561.6 362.1 564.1 362.0 566.6 361.8 569.3" fill="none" stroke="#6a6a6a" stroke-width="3.4" stroke-linejoin="round"/>
<path d="M347.9 405.4 402.6 448.3 389.7 510.0 379.6 567.2 313.6 586.5" fill="none" stroke="#ff6424" stroke-width="2.2" stroke-linejoin="round" stroke-linecap="round"/>
<path d="M170 387 L220 404" stroke="#2a5cff" stroke-width="16" stroke-linecap="round" filter="url(#bblur)"/>
<path d="M367.0 379.6 367.9 381.0 368.8 382.4 369.7 383.8 370.6 385.2 371.6 386.5 372.6 387.8 373.6 389.0 374.7 390.0 375.9 390.9 377.1 391.7 378.3 392.5 379.5 393.4 380.8 394.4 382.0 395.7 383.3 397.2 384.6 398.9 385.9 400.7 387.2 402.6 388.4 404.6 389.7 406.6 390.8 408.6 391.8 410.6 392.7 412.7 393.6 414.8 394.4 416.9 395.3 419.1 396.2 421.3 397.2 423.6 398.3 426.0 399.5 428.5 400.7 431.2 402.0 433.8 403.3 436.3 404.6 438.7 405.8 440.8 407.1 442.6 408.4 444.1 409.7 445.4 411.0 446.7 412.3 448.0 413.4 449.6 414.4 451.5 415.3 453.8 416.1 456.4 416.8 459.2 417.5 462.1 418.0 465.0 418.4 468.0 418.6 470.8 418.6 473.6 418.5 476.5 418.1 479.5 417.7 482.4 417.3 485.1 416.9 487.7 416.5 490.0 416.2 491.8 416.0 493.1 415.8 494.2 415.6 495.2 415.3 496.5 414.9 498.2 414.4 500.7 413.7 504.0 412.9 507.9 411.9 512.2 410.9 516.8 409.9 521.6 408.9 526.2 407.9 530.7 407.0 535.1 406.1 539.5 405.2 544.0 404.2 548.5 403.3 552.8 402.4 557.0 401.5 560.8 400.7 564.4 399.9 567.9 399.2 571.3 398.4 574.4 397.5 577.3 396.4 579.9 395.0 582.2 393.3 584.1 391.5 585.6 389.4 586.8 387.2 587.8 384.8 588.7 382.4 589.7 380.0 590.8 377.5 592.1 374.9 593.4 372.3 594.7 369.6 596.0 366.7 597.2 363.8 598.3 360.8 599.3 357.6 600.1 354.3 600.7 350.8 601.2 347.2 601.7 343.8 602.2 340.4 602.8 337.2 603.6 334.1 604.6 331.0 605.8 328.0 607.1 325.1 608.4 322.4 609.8 319.9 611.0 317.9 612.2 316.1 613.4 314.8 614.5 313.8 615.5 313.1 616.5 312.3 617.6 311.4 618.6" fill="none" stroke="#c89a8a" stroke-width="1" stroke-dasharray="1 4" opacity="0.6"/>

<rect x="611" y="0" width="1" height="653" fill="#0e0e0e"/>
<!-- viewport -->
<rect x="612" y="0" width="668" height="653" fill="#404040"/>


<path d="M612 517.5 L1280 518.5" stroke="#464646" stroke-width="1" opacity="0.7"/>
<path d="M660 541 C800 540 1000 541 1280 543" fill="none" stroke="#464646" stroke-width="1" opacity="0.6"/>
<defs>
  <clipPath id="sphclip"><circle cx="1090" cy="256" r="235"/></clipPath>
  <radialGradient id="sbase" gradientUnits="userSpaceOnUse" cx="1010" cy="230" r="300">
    <stop offset="0" stop-color="#b6b6b6"/>
    <stop offset="0.65" stop-color="#ababab"/>
    <stop offset="1" stop-color="#969696"/>
  </radialGradient>
  <linearGradient id="lpanel" gradientUnits="userSpaceOnUse" x1="900" y1="200" x2="1070" y2="320">
    <stop offset="0" stop-color="#cacbcc"/>
    <stop offset="1" stop-color="#c2c3c4"/>
  </linearGradient>
  <linearGradient id="rpanel" gradientUnits="userSpaceOnUse" x1="1070" y1="200" x2="1280" y2="300">
    <stop offset="0" stop-color="#b8b9ba"/>
    <stop offset="1" stop-color="#a0a0a0"/>
  </linearGradient>
  <linearGradient id="lshell" gradientUnits="userSpaceOnUse" x1="1000" y1="280" x2="1060" y2="490">
    <stop offset="0" stop-color="#c2c2c2"/>
    <stop offset="0.5" stop-color="#b6b6b6"/>
    <stop offset="1" stop-color="#7e7e7e"/>
  </linearGradient>
  <radialGradient id="edgeshade" gradientUnits="userSpaceOnUse" cx="1040" cy="240" r="285">
    <stop offset="0.7" stop-color="#000" stop-opacity="0"/>
    <stop offset="1" stop-color="#000" stop-opacity="0.15"/>
  </radialGradient>
  <linearGradient id="bface" gradientUnits="userSpaceOnUse" x1="870" y1="140" x2="910" y2="260">
    <stop offset="0" stop-color="#a2a2a2"/>
    <stop offset="1" stop-color="#989898"/>
  </linearGradient>
  <linearGradient id="bwall" gradientUnits="userSpaceOnUse" x1="900" y1="0" x2="945" y2="0">
    <stop offset="0" stop-color="#8e8e8e"/>
    <stop offset="1" stop-color="#747474"/>
  </linearGradient>
  <filter id="sb1" x="-20%" y="-20%" width="140%" height="140%"><feGaussianBlur stdDeviation="1"/></filter>
  <filter id="sb2" filterUnits="userSpaceOnUse" x="850" y="0" width="430" height="500"><feGaussianBlur stdDeviation="2"/></filter>
  <filter id="sb4" filterUnits="userSpaceOnUse" x="850" y="0" width="430" height="500"><feGaussianBlur stdDeviation="4"/></filter>
  <filter id="ob" filterUnits="userSpaceOnUse" x="850" y="250" width="430" height="200"><feGaussianBlur stdDeviation="0.9"/></filter>
  <linearGradient id="rshade" gradientUnits="userSpaceOnUse" x1="1170" y1="0" x2="1285" y2="0">
    <stop offset="0" stop-color="#000" stop-opacity="0"/>
    <stop offset="1" stop-color="#000" stop-opacity="0.16"/>
  </linearGradient>
</defs>
<g clip-path="url(#sphclip)">
  <circle cx="1090" cy="256" r="235" fill="url(#sbase)"/>
  <!-- top cap ridge and groove -->
  <path d="M880 160 L902 131 C910 118 915 110 920.7 103.3 C928 96 933 92.5 939 92.3 C945 92 948 97 952 97.8 C958 98 963 94 970.3 92.3 C1000 82 1030 72 1060 68.4 C1090 65 1110 66 1133.8 68 C1170 72 1200 80 1227.5 88.8 C1250 96 1268 105 1300 125 L1300 160 L1280 145 C1250 125 1220 110 1190 103.8 C1150 96 1120 92 1096 92.5 C1080 93 1070 95 1060 97.8 C1020 106 990 112 955.6 120.8 C952 118 950 115 948.2 114.3 C945 112 940 110 937.2 110.7 C925 115 918 124 911.5 130.9 L890 165 Z" fill="#a4a4a4"/>
  <path d="M906 124 C915 113 925 106 940 102 C948 103 953 110 959 111 C1000 99 1040 90 1078 88.5 C1120 88 1160 92 1197 100 C1230 108 1260 118 1290 132" fill="none" stroke="#979797" stroke-width="5" filter="url(#sb2)"/>
  <path d="M904 129 C913 117 922 109 929.9 107 C934 105.5 938 104.8 940.9 105.1 C945 106 947 110 950 112.5 C953 115 956 115.5 959.3 115 C980 109 1000 102 1018.8 98 C1040 94 1060 92 1078 92 C1100 92 1120 92.5 1137.5 93.5 C1160 96 1180 100 1197 104 C1215 108 1230 112 1241.6 116 C1258 121 1270 126 1280 130 L1300 140 L1300 160 L1280 145 C1265 137 1255 132 1241.6 127 C1225 120 1210 113 1197 109 C1180 104 1160 99 1137.5 97 C1120 96 1100 95.5 1078 95.5 C1060 96 1040 98 1018.8 101.5 C1000 106 980 112 959.3 118.5 C958 119.5 957 120.5 955.6 120.8 C952 118 950 115 948.2 114.3 C945 112 940 110 937.2 110.7 C925 115 918 124 911.5 130.9 Z" fill="#5e5e5e"/>
  <path d="M902 131 C910 118 915 110 920.7 103.3 C928 96 933 92.5 939 92.3 C945 92 948 97 952 97.8 C958 98 963 94 970.3 92.3 C1000 82 1030 72 1060 68.4 C1090 65 1110 66 1133.8 68 C1170 72 1200 80 1227.5 88.8 C1250 96 1268 105 1300 125" fill="none" stroke="#b6b6b6" stroke-width="2" filter="url(#sb1)"/>
  <path d="M911.5 132 C918 125 925 116 937.2 111.7 C940 111 945 113 948.2 115.3 C950 116 952 119 955.6 121.8 C990 113 1020 107 1060 98.8 C1070 96 1080 94 1096 93.5 C1120 93 1150 97 1190 104.8 C1220 111 1250 126 1280 146" fill="none" stroke="#b4b4b4" stroke-width="1.5" filter="url(#sb1)"/>
  <path d="M1018 31.8 C1008 45 995 65 989.4 82" fill="none" stroke="#7e7e7e" stroke-width="1.2"/>
  <path d="M1019 33 C1009 46 997 66 991 83" fill="none" stroke="#c0c0c0" stroke-width="1" opacity="0.7"/>
  <path d="M999.5 59.6 C1040 54 1080 49 1118.7 46.9 C1160 46 1200 56 1229.6 70.4" fill="none" stroke="#7e7e7e" stroke-width="1.2"/>
  <path d="M999.5 61 C1040 55.5 1080 50.5 1118.7 48.4 C1160 47.5 1200 57.5 1229.6 72" fill="none" stroke="#bebebe" stroke-width="1" opacity="0.7"/>
  <!-- left front panel -->
  <path d="M860 390 L845 330 L850 300 C870 305 890 300 896 296 C908 278 915 268 920.5 259.4 C928 245 932 232 936 222.6 C940 210 942 202 948 197 C955 192 962 190 966.6 189.8 C1000 178 1030 172 1059.5 168.6 L1066 257.6 L1050 265.3 C1010 283 960 305 926.6 322.8 C905 335 885 350 870 370 Z" fill="url(#lpanel)"/>
  <!-- right front panel -->
  <path d="M1059.5 168.6 C1100 166 1139 166 1180 172 C1220 178 1255 190 1290 205 L1290 272 L1278.6 272 L1269 312 L1066 257.6 Z" fill="url(#rpanel)"/>
  <!-- lower shell -->
  <path d="M850 390 L870 366 L876.8 359.2 C900 340 915 330 926.6 322.8 C970 300 1010 283 1050 265.3 L1066 257.6 L1269 312 L1290 318 L1290 653 L850 653 Z" fill="url(#lshell)"/>
  <!-- panel edges -->
  <path d="M900 300 C912 281 919 270 924 262 C932 248 936 235 940 225 C944 213 946 206 951 201 C958 196 964 194 968 193.8 C1001 182 1031 176 1060 172.6 C1100 170 1139 170 1180 176 C1220 182 1255 194 1290 209" fill="none" stroke="#b0b0b0" stroke-width="6" opacity="0.8"/>
  <path d="M896 296 C908 278 915 268 920.5 259.4 C928 245 932 232 936 222.6 C940 210 942 202 948 197 C955 192 962 190 966.6 189.8 C1000 178 1030 172 1059.5 168.6 C1100 166 1139 166 1180 172 C1220 178 1255 190 1290 205" fill="none" stroke="#7a7a7a" stroke-width="1"/>
  <path d="M1059.5 168.6 L1066 257.6" fill="none" stroke="#5a5a5a" stroke-width="1.6"/>
  <path d="M1278.6 272 L1269 312" fill="none" stroke="#e0e0e0" stroke-width="1.6"/>
  <path d="M870 368 L876.8 359.2 C900 340 915 330 926.6 322.8 C970 300 1010 283 1050 265.3 L1066 257.6 L1269 312 L1290 318" fill="none" stroke="#505050" stroke-width="1.6"/>
  <path d="M872 372 L879 364 C902 345 917 335 928 327.5 C972 305 1012 288 1052 270 L1066 262.5 L1269 317 L1290 323" fill="none" stroke="#d8d8d8" stroke-width="1.2" filter="url(#sb1)"/>
  <!-- surface wave -->
  <path d="M1006 352 C1040 352 1070 368 1100 384 C1140 404 1190 420 1260 426" fill="none" stroke="#8c8c8c" stroke-width="4" filter="url(#sb2)"/>
  <path d="M1004 345 C1040 345 1070 360 1100 376 C1140 396 1190 412 1260 418" fill="none" stroke="#d2d2d2" stroke-width="6" opacity="0.8" filter="url(#sb4)"/>
  <path d="M970 382 C976 395 982 408 990 418 C996 426 1004 434 1012 440" fill="none" stroke="#8e8e8e" stroke-width="11" filter="url(#sb4)"/>
  <path d="M950 382 C956 398 964 412 975 425 C982 433 990 440 998 445" fill="none" stroke="#d0d0d0" stroke-width="8" opacity="0.8" filter="url(#sb4)"/>
  <path d="M880 392 C905 420 935 440 965 456 C990 468 1020 480 1060 490" fill="none" stroke="#7e7e7e" stroke-width="14" filter="url(#sb4)"/>
  <path d="M900 393 C920 412 940 428 965 442 C975 447 985 451 995 454" fill="none" stroke="#c6c6c6" stroke-width="2.5" opacity="0.8" filter="url(#sb1)"/>
  <!-- button rings -->
  <ellipse cx="918" cy="206" rx="34" ry="92" transform="rotate(12 918 206)" fill="#b4b4b4"/>
  <ellipse cx="918" cy="206" rx="31" ry="88" transform="rotate(12 918 206)" fill="none" stroke="#6c6c6c" stroke-width="2.5" filter="url(#sb1)"/>
  <ellipse cx="918" cy="206" rx="27.5" ry="83" transform="rotate(12 918 206)" fill="none" stroke="#bdbdbd" stroke-width="4.5"/>
  <ellipse cx="917" cy="204" rx="22" ry="71" transform="rotate(12 917 204)" fill="#4a4a4a"/>
  <path d="M856.8 293.6 L864 282 C872 285 885 290 900 294 C908 297 913 300 916 303 C905 309 895 313 885.8 315 C875 315 866 313 860 309 Z" fill="#c2c2c2"/>
  <path d="M864 282 C872 285 885 290 900 294 C908 297 913 300 916 303" fill="none" stroke="#8a8a8a" stroke-width="1"/>
  <!-- button wall -->
  <ellipse cx="918.0" cy="207.0" rx="25.2" ry="68" transform="rotate(12 918.0 207.0)" fill="#747474"/>
  <ellipse cx="917.0" cy="206.8" rx="25.2" ry="68" transform="rotate(12 917.0 206.8)" fill="#757575"/>
  <ellipse cx="916.0" cy="206.6" rx="25.2" ry="68" transform="rotate(12 916.0 206.6)" fill="#767676"/>
  <ellipse cx="915.0" cy="206.4" rx="25.2" ry="68" transform="rotate(12 915.0 206.4)" fill="#777777"/>
  <ellipse cx="914.0" cy="206.2" rx="25.2" ry="68" transform="rotate(12 914.0 206.2)" fill="#797979"/>
  <ellipse cx="913.0" cy="206.0" rx="25.2" ry="68" transform="rotate(12 913.0 206.0)" fill="#7a7a7a"/>
  <ellipse cx="912.0" cy="205.8" rx="25.2" ry="68" transform="rotate(12 912.0 205.8)" fill="#7b7b7b"/>
  <ellipse cx="911.0" cy="205.7" rx="25.2" ry="68" transform="rotate(12 911.0 205.7)" fill="#7c7c7c"/>
  <ellipse cx="910.0" cy="205.5" rx="25.2" ry="68" transform="rotate(12 910.0 205.5)" fill="#7d7d7d"/>
  <ellipse cx="909.0" cy="205.3" rx="25.2" ry="68" transform="rotate(12 909.0 205.3)" fill="#7e7e7e"/>
  <ellipse cx="908.0" cy="205.1" rx="25.2" ry="68" transform="rotate(12 908.0 205.1)" fill="#808080"/>
  <ellipse cx="907.0" cy="204.9" rx="25.2" ry="68" transform="rotate(12 907.0 204.9)" fill="#818181"/>
  <ellipse cx="906.0" cy="204.7" rx="25.2" ry="68" transform="rotate(12 906.0 204.7)" fill="#828282"/>
  <ellipse cx="905.0" cy="204.5" rx="25.2" ry="68" transform="rotate(12 905.0 204.5)" fill="#838383"/>
  <ellipse cx="904.0" cy="204.3" rx="25.2" ry="68" transform="rotate(12 904.0 204.3)" fill="#848484"/>
  <ellipse cx="903.0" cy="204.1" rx="25.2" ry="68" transform="rotate(12 903.0 204.1)" fill="#858585"/>
  <ellipse cx="902.0" cy="203.9" rx="25.2" ry="68" transform="rotate(12 902.0 203.9)" fill="#868686"/>
  <ellipse cx="901.0" cy="203.7" rx="25.2" ry="68" transform="rotate(12 901.0 203.7)" fill="#888888"/>
  <ellipse cx="900.0" cy="203.5" rx="25.2" ry="68" transform="rotate(12 900.0 203.5)" fill="#898989"/>
  <ellipse cx="899.0" cy="203.3" rx="25.2" ry="68" transform="rotate(12 899.0 203.3)" fill="#8a8a8a"/>
  <ellipse cx="898.0" cy="203.2" rx="25.2" ry="68" transform="rotate(12 898.0 203.2)" fill="#8b8b8b"/>
  <ellipse cx="897.0" cy="203.0" rx="25.2" ry="68" transform="rotate(12 897.0 203.0)" fill="#8c8c8c"/>
  <ellipse cx="896.0" cy="202.8" rx="25.2" ry="68" transform="rotate(12 896.0 202.8)" fill="#8d8d8d"/>
  <ellipse cx="895.0" cy="202.6" rx="25.2" ry="68" transform="rotate(12 895.0 202.6)" fill="#8f8f8f"/>
  <ellipse cx="894.0" cy="202.4" rx="25.2" ry="68" transform="rotate(12 894.0 202.4)" fill="#909090"/>
  <ellipse cx="893.0" cy="202.2" rx="25.2" ry="68" transform="rotate(12 893.0 202.2)" fill="#919191"/>
  <ellipse cx="892.0" cy="202.0" rx="25.2" ry="68" transform="rotate(12 892.0 202.0)" fill="#929292"/>
  <ellipse cx="892" cy="202" rx="25.2" ry="68" transform="rotate(12 892 202)" fill="url(#bface)"/>
  <ellipse cx="892" cy="202" rx="24.8" ry="67.6" transform="rotate(12 892 202)" fill="none" stroke="#b4b4b4" stroke-width="0.8" opacity="0.5"/>
  <!-- strokes -->
  <path d="M908 338 C930 318 970 300 1000 283 C1025 268 1040 256 1048 262 C1056 274 1054 296 1040 306 C1000 328 965 352 935 370 C922 376 912 368 908 338 Z" fill="#1d3cb8" filter="url(#sb4)"/>
  <path d="M930 322 C960 302 995 280 1025 262 C1038 256 1046 258 1044 266 L935 326 Z" fill="#4f6dcf" opacity="0.8" filter="url(#sb4)"/>
  <path d="M926.6 322.8 C970 300 1010 283 1050 265.3" fill="none" stroke="#101a50" stroke-width="1.6"/>
  <path d="M897.5 395.6 L913 396.5 L931.5 392 L938.8 393.8 L959 377.2 L964.6 370.8 L986.6 358.8 L1017.9 340.4 L1036 331.2 L1072.7 315 C1105 332 1150 356 1190 370 C1225 382 1255 388 1290 389" fill="none" stroke="#c24c1c" stroke-width="6.5" stroke-linejoin="round" filter="url(#ob)"/>
  <path d="M962 375 L987 361 L1018 343 L1034 334" fill="none" stroke="#bf4a1a" stroke-width="11" stroke-linejoin="round" filter="url(#ob)"/>
  <path d="M966 378 C980 376 995 372 1005 366 L1010 360 L995 360 Z" fill="#b9481b" filter="url(#sb2)"/>
  <path d="M1032 404 C1080 410 1160 424 1234 432 C1215 452 1190 462 1150 462 C1100 460 1050 448 1030 428 C1024 418 1025 406 1032 404 Z" fill="#27a02a" filter="url(#sb4)"/>
  <path d="M1008 432 C1050 440 1120 452 1195 458 C1180 474 1150 482 1110 480 C1060 476 1020 466 1005 450 C1000 442 1002 434 1008 432 Z" fill="#229528" filter="url(#sb4)"/>
  <path d="M1010 432 C1060 445 1130 455 1194 459" fill="none" stroke="#5fb35f" stroke-width="1.2" opacity="0.7" filter="url(#sb1)"/>
  
  <rect x="1150" y="0" width="140" height="653" fill="url(#rshade)"/>
  <circle cx="1090" cy="256" r="235" fill="url(#edgeshade)"/>
</g>
<path d="M845 238 L861.5 238 L866 256 L866 266 L862 280 L856.8 293.6 L845 293.6 Z" fill="#404040"/>

<!-- axis lines -->
<line x1="612" y1="104" x2="886" y2="197" stroke="#6b8a35" stroke-width="1"/>
<line x1="612" y1="527" x2="883" y2="376" stroke="#7d3b45" stroke-width="1"/>
<line x1="1263.5" y1="161.3" x2="1280" y2="152" stroke="#c05060" stroke-width="1"/>
<text filter="url(#idf)" x="682.5" y="4.3" font-family="Liberation Sans" font-size="12.8" fill="#e8e8e8">(1) BottomShell</text>
<!-- hand nav gizmo -->
<circle cx="586" cy="-13" r="14.5" fill="#2b2b2b"/>
<circle cx="586" cy="20" r="14.5" fill="#2b2b2b"/>
<g fill="none" stroke="#e2e2e2" stroke-linecap="round">
<path d="M583.3 13.3 L583.6 21" stroke-width="2.1"/>
<path d="M587.4 12.6 L587.4 21" stroke-width="2.1"/>
<path d="M591.5 13.6 L591 21" stroke-width="2.1"/>
<path d="M594.6 17.6 L593 23" stroke-width="2"/>
<path d="M578.8 21.6 L582.5 25" stroke-width="2.4"/>
</g>
<path d="M581.6 19.5 L594 19.5 L593.5 23.5 C592.5 27 590 29 586.5 29 C583.5 29 581.5 27 580.5 25 Z" fill="#e2e2e2"/>
<!-- toolbar -->
<path d="M620 0 H664 V180.5 a4 4 0 0 1 -4 4 H624 a4 4 0 0 1 -4 -4 Z" fill="#282828"/>
<rect x="620" y="0" width="44" height="7" fill="#4772b3"/>
<rect x="620" y="7" width="44" height="1" fill="#1f1f1f"/>
<rect x="620" y="42" width="44" height="1" fill="#303030"/>
<rect x="620" y="77.5" width="44" height="1" fill="#303030"/>
<rect x="620" y="113" width="44" height="1" fill="#303030"/>
<rect x="620" y="148.5" width="44" height="1" fill="#303030"/>
<path d="M624 191 H660 a4 4 0 0 1 4 4 V221 a4 4 0 0 1 -4 4 H624 a4 4 0 0 1 -4 -4 V195 a4 4 0 0 1 4 -4 Z" fill="#282828"/>
<!-- icon: drop -->
<path d="M634 25 C633 30 637 33.5 641 33 C645 32.5 648 30 649 27.5 L647.5 25 C645 27 638 27.5 634 25 Z" fill="#9a9a9a"/>
<path d="M641.3 14 L646.3 21 C648.4 24.5 646.8 28.8 641.3 28.8 C635.8 28.8 634.2 24.5 636.3 21 Z" fill="#e6e6e6" stroke="#1c1c1c" stroke-width="1"/>
<!-- icon: smear -->
<path d="M633.2 68.6 C634 66.6 645.5 65.8 646.8 67.3 C647.2 68.8 640 70.2 635.2 70.2 C633.6 70.2 632.9 69.6 633.2 68.6 Z" fill="#8a8a8a"/>
<path d="M635 55.2 L639.8 50.6 L643.4 49.3 L646.2 51.5 L647.6 54.4 L646.8 58.5 L646.3 62.8 C646 64.6 644.4 64.6 644.1 62.9 L643.6 60.2 L640.5 62.6 L637.6 60.6 L637.2 58.8 L636 57.6 Z" fill="#e6e6e6"/>
<path d="M634.8 66.2 L643.8 58" stroke="#e6e6e6" stroke-width="2.2" stroke-linecap="round"/>
<!-- icon: clone stamp -->
<circle cx="641.5" cy="89" r="3" fill="#e6e6e6"/>
<rect x="640" y="90" width="3" height="4" fill="#e6e6e6"/>
<rect x="634" y="93.5" width="15" height="3" rx="1" fill="#e6e6e6"/>
<rect x="634" y="97.5" width="15" height="1.5" fill="#e6e6e6"/>
<path d="M633 103 L635 100 H648 L650 103 Z" fill="#9a9a9a"/>
<!-- icon: fill -->
<path d="M642.8 120 L650.5 128.5 L642.8 137 L635 128.5 Z" fill="none" stroke="#e6e6e6" stroke-width="1.6"/>
<path d="M636.5 128.5 H649 L642.8 135.3 Z" fill="#e6e6e6"/>
<circle cx="643" cy="120" r="1.6" fill="none" stroke="#e6e6e6" stroke-width="1"/>
<line x1="643" y1="121" x2="643" y2="127" stroke="#e6e6e6" stroke-width="1"/>
<path d="M633.5 131 L636.5 135.5 C637.5 137.5 636 140 633.5 140 C631 140 629.5 137.5 630.5 135.5 Z" fill="#8a8a8a"/>
<!-- icon: clone/copy -->
<rect x="633.5" y="163" width="12.5" height="12" fill="#9a9a9a"/>
<rect x="639.5" y="157.5" width="11.5" height="11.5" fill="#262626" stroke="#e6e6e6" stroke-width="1.4"/>
<path d="M642 160 H645 A4.5 4.5 0 0 1 649 166.5 H642 Z" fill="#e6e6e6"/>
<!-- icon: pencil -->
<path d="M633.9 213 L647.4 199.8 C648.5 198.6 648.5 197.4 647.4 196.3 L646.8 195.7 C645.7 194.6 644.5 194.6 643.4 195.7 L630.1 209 L628.3 214.8 Z" fill="#e6e6e6"/>
<path d="M640.4 198.9 L644.6 203.1" stroke="#282828" stroke-width="1.1"/>
<path d="M630 215.5 C633 219.5 637 219 640 216 C643 212.5 646 210.5 649.5 211.5 C652 212.3 653.8 214 654.8 216" fill="none" stroke="#6ccb9a" stroke-width="1.4" stroke-linecap="round"/>
<path d="M661 219.5 V223 H657.5 Z" fill="#9a9a9a"/>

<!-- sphere -->

</svg>

</body></html>
